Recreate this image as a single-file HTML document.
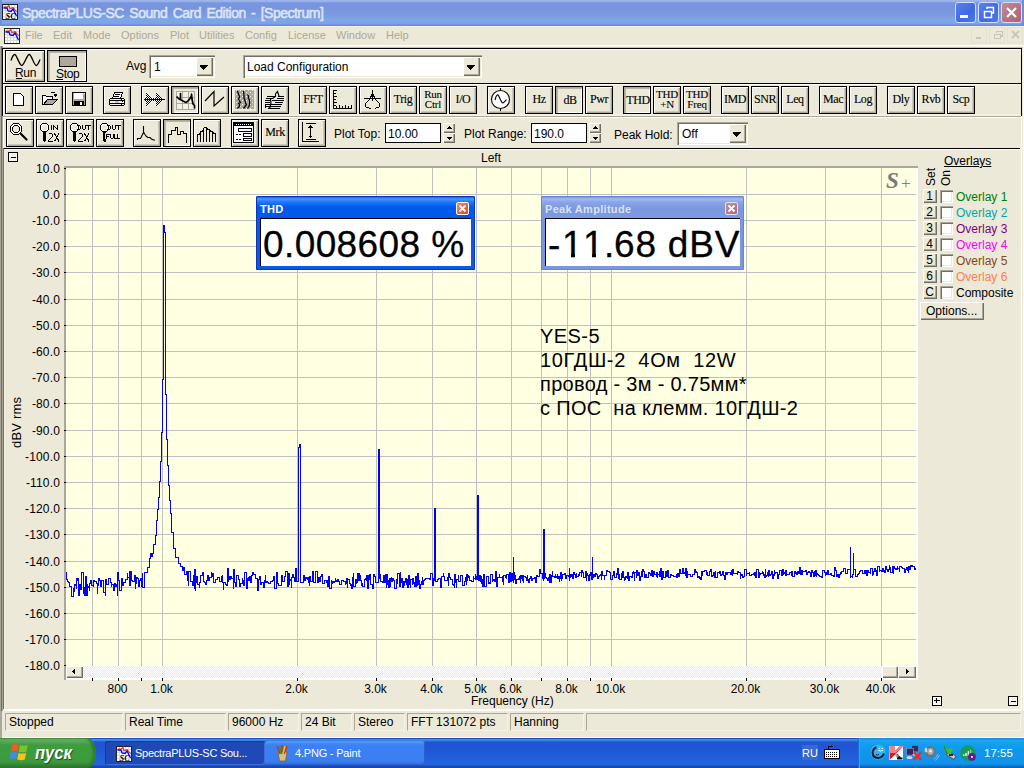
<!DOCTYPE html><html><head><meta charset="utf-8"><style>
*{margin:0;padding:0;box-sizing:border-box}
html,body{width:1024px;height:768px;overflow:hidden;background:#ece9d8;font-family:"Liberation Sans",sans-serif;position:relative}
.a{position:absolute}
.t{position:absolute;white-space:pre;line-height:1}
.btn{position:absolute;width:28px;height:28px;border:1px solid #000;background:#ece9d8;box-shadow:inset 1px 1px 0 #fff,inset -1px -1px 0 #aca899,inset -2px -2px 0 #ece9d8}
.btn.r{box-shadow:inset 1px 1px 0 #fff,inset -2px -2px 0 #aca899}
.btn.p{background:#f4f3ee;box-shadow:inset 1px 1px 0 #aca899,inset -1px -1px 0 #fff}
.bt{position:absolute;left:0;right:0;text-align:center;font-family:"Liberation Serif",serif;color:#000}
</style></head><body><div style="position:absolute;left:0px;top:0px;width:1024px;height:26px;background:linear-gradient(to bottom,#97aee8 0px,#a3bbee 1px,#88a6e6 2px,#7796df 3px,#7893df 6px,#7a98e1 14px,#7ea6e7 20px,#7ca2e6 24px,#6d8ad8 25px,#6d8ad8 26px)"></div><div style="position:absolute;left:0px;top:0px;width:2px;height:26px;background:#7090d8"></div><div style="position:absolute;left:1022px;top:0px;width:2px;height:26px;background:#6f8cdc"></div><svg class="a" style="left:2px;top:4px" width="16" height="16" viewBox="0 0 16 16"><rect x="0" y="0" width="16" height="16" fill="#222"/><rect x="1" y="1" width="14" height="14" fill="#fff"/><rect x="3" y="1" width="1" height="14" fill="#d8d8d8"/><rect x="1" y="3" width="14" height="1" fill="#d8d8d8"/><rect x="6" y="1" width="1" height="14" fill="#d8d8d8"/><rect x="1" y="6" width="14" height="1" fill="#d8d8d8"/><rect x="9" y="1" width="1" height="14" fill="#d8d8d8"/><rect x="1" y="9" width="14" height="1" fill="#d8d8d8"/><rect x="12" y="1" width="1" height="14" fill="#d8d8d8"/><rect x="1" y="12" width="14" height="1" fill="#d8d8d8"/><polyline points="1.5,3 5,3 7,1.5 8,5 11,3.5 13.5,6.5 14.5,8" fill="none" stroke="#f03030" stroke-width="1.2"/><polyline points="1.5,4 5,4 6,7 9,7.5 11,5 13,9 14.5,12" fill="none" stroke="#0000f0" stroke-width="1.3"/><text x="3.5" y="14.5" font-family="Liberation Serif" font-style="italic" font-weight="bold" font-size="8.5" fill="#000">SC</text></svg><div class="t" style="left:22px;top:6px;font-size:14px;font-weight:normal;color:#dce5f7;letter-spacing:-0.5px;word-spacing:2px;-webkit-text-stroke:0.55px #dce5f7">SpectraPLUS-SC Sound Card Edition - [Spectrum]</div><div style="position:absolute;left:955px;top:2px;width:21px;height:21px;border:1px solid #d4ddf6;border-radius:3px;background:linear-gradient(135deg,#5a82ea,#3e68e6 60%,#4a7cf0)"></div><div style="position:absolute;left:978px;top:2px;width:21px;height:21px;border:1px solid #d4ddf6;border-radius:3px;background:linear-gradient(135deg,#5a82ea,#3e68e6 60%,#4a7cf0)"></div><div style="position:absolute;left:1001px;top:2px;width:21px;height:21px;border:1px solid #d4ddf6;border-radius:3px;background:linear-gradient(135deg,#c08a94,#b06070)"></div><div style="position:absolute;left:960px;top:15px;width:8px;height:3px;background:#fff"></div><svg class="a" style="left:978px;top:2px" width="21" height="21"><rect x="6.5" y="9.5" width="7" height="6" fill="none" stroke="#fff" stroke-width="1.5"/><polyline points="9,7 9,5.5 15.5,5.5 15.5,11 13.5,11" fill="none" stroke="#fff" stroke-width="1.5"/></svg><svg class="a" style="left:1001px;top:2px" width="21" height="21"><path d="M6 6L15 15M15 6L6 15" stroke="#fff" stroke-width="2.2"/></svg><div style="position:absolute;left:0px;top:26px;width:1024px;height:19px;background:#ece9d8"></div><div style="position:absolute;left:0px;top:26px;width:1024px;height:1px;background:#f3f1e4"></div><div style="position:absolute;left:0px;top:45px;width:1024px;height:1px;background:#fff"></div><svg class="a" style="left:4px;top:28px" width="16" height="16" viewBox="0 0 16 16"><rect x="0" y="0" width="16" height="16" fill="#222"/><rect x="1" y="1" width="14" height="14" fill="#fff"/><rect x="3" y="1" width="1" height="14" fill="#d8d8d8"/><rect x="1" y="3" width="14" height="1" fill="#d8d8d8"/><rect x="6" y="1" width="1" height="14" fill="#d8d8d8"/><rect x="1" y="6" width="14" height="1" fill="#d8d8d8"/><rect x="9" y="1" width="1" height="14" fill="#d8d8d8"/><rect x="1" y="9" width="14" height="1" fill="#d8d8d8"/><rect x="12" y="1" width="1" height="14" fill="#d8d8d8"/><rect x="1" y="12" width="14" height="1" fill="#d8d8d8"/><polyline points="1.5,3 5,3 7,1.5 8,5 11,3.5 13.5,6.5 14.5,8" fill="none" stroke="#f03030" stroke-width="1.2"/><polyline points="1.5,4 5,4 6,7 9,7.5 11,5 13,9 14.5,12" fill="none" stroke="#0000f0" stroke-width="1.3"/></svg><div class="t" style="left:25px;top:30px;font-size:11px;color:#aca899">File</div><div class="t" style="left:53px;top:30px;font-size:11px;color:#aca899">Edit</div><div class="t" style="left:83px;top:30px;font-size:11px;color:#aca899">Mode</div><div class="t" style="left:121px;top:30px;font-size:11px;color:#aca899">Options</div><div class="t" style="left:170px;top:30px;font-size:11px;color:#aca899">Plot</div><div class="t" style="left:199px;top:30px;font-size:11px;color:#aca899">Utilities</div><div class="t" style="left:245px;top:30px;font-size:11px;color:#aca899">Config</div><div class="t" style="left:288px;top:30px;font-size:11px;color:#aca899">License</div><div class="t" style="left:336px;top:30px;font-size:11px;color:#aca899">Window</div><div class="t" style="left:386px;top:30px;font-size:11px;color:#aca899">Help</div><svg class="a" style="left:970px;top:27px" width="54" height="17" shape-rendering="crispEdges"><rect x="1.5" y="0.5" width="15" height="15" fill="none" stroke="#e4e1d0"/><rect x="19.5" y="0.5" width="15" height="15" fill="none" stroke="#e4e1d0"/><rect x="37.5" y="0.5" width="15" height="15" fill="none" stroke="#e4e1d0"/><rect x="6" y="10" width="5" height="2" fill="#c8c5b8"/><rect x="24.5" y="7.5" width="6" height="4" fill="none" stroke="#c8c5b8" stroke-width="1.2"/><polyline points="26.5,6 26.5,4.5 32.5,4.5 32.5,9 31,9" fill="none" stroke="#c8c5b8" stroke-width="1.2"/><path d="M42 4L49 11M49 4L42 11" stroke="#c8c5b8" stroke-width="1.8" shape-rendering="auto"/></svg><div style="position:absolute;left:0px;top:46px;width:2px;height:692px;background:#aca899"></div><div style="position:absolute;left:1px;top:46px;width:1px;height:692px;background:#9d9a8b"></div><div style="position:absolute;left:0px;top:46px;width:1024px;height:1px;background:#f6f4ea"></div><div style="position:absolute;left:0px;top:47px;width:1024px;height:1px;background:#c4c1b1"></div><div style="position:absolute;left:0px;top:46px;width:1px;height:691px;background:#aca899"></div><div style="position:absolute;left:1px;top:46px;width:1px;height:691px;background:#716f64"></div><div style="position:absolute;left:2px;top:46px;width:1px;height:691px;background:#aca899"></div><div style="position:absolute;left:3px;top:148px;width:1px;height:561px;background:#716f64"></div><div style="position:absolute;left:2px;top:48px;width:1020px;height:1px;background:#000"></div><div style="position:absolute;left:2px;top:48px;width:1px;height:68px;background:#000"></div><div style="position:absolute;left:1021px;top:48px;width:1px;height:68px;background:#000"></div><div style="position:absolute;left:3px;top:49px;width:1018px;height:1px;background:#fffdf3"></div><div style="position:absolute;left:3px;top:49px;width:1px;height:66px;background:#fffdf3"></div><div style="position:absolute;left:2px;top:83px;width:1020px;height:1px;background:#000"></div><div style="position:absolute;left:3px;top:84px;width:1018px;height:1px;background:#fffdf3"></div><div style="position:absolute;left:3px;top:114px;width:1018px;height:2px;background:#f3f1e4"></div><div style="position:absolute;left:2px;top:116px;width:1019px;height:1px;background:#aca899"></div><div style="position:absolute;left:3px;top:117px;width:1017px;height:1px;background:#fff"></div><div style="position:absolute;left:3px;top:117px;width:1px;height:31px;background:#fff"></div><div style="position:absolute;left:1021px;top:117px;width:1px;height:31px;background:#fff"></div><div style="position:absolute;left:4px;top:148px;width:1016px;height:1px;background:#000"></div><div style="position:absolute;left:4px;top:149px;width:1016px;height:1px;background:#fffbee"></div><div style="position:absolute;left:4px;top:149px;width:1px;height:560px;background:#f5f2e3"></div><div style="position:absolute;left:1021px;top:149px;width:1px;height:561px;background:#fff"></div><div style="position:absolute;left:1020px;top:149px;width:1px;height:560px;background:#f1efe2"></div><div style="position:absolute;left:1023px;top:46px;width:1px;height:691px;background:#fbfaf4"></div><div style="position:absolute;left:4px;top:709px;width:1017px;height:2px;background:#fff"></div><div style="position:absolute;left:5px;top:50px;width:40px;height:32px;border:1px solid #000;box-shadow:inset 1px 1px 0 #fff,inset -1px -1px 0 #aca899,inset -2px -2px 0 #cdcab9;background:#ece9d8"></div><div style="position:absolute;left:47px;top:50px;width:40px;height:32px;border:1px solid #000;box-shadow:inset 1px 1px 0 #aca899,inset 2px 2px 0 #b8b5a5,inset -1px -1px 0 #fff;background:#ece9d8"></div><svg class="a" style="left:5px;top:50px" width="40" height="32"><path d="M6 10.5C7.5 6 8.5 4.5 9.8 4.5C11.5 4.5 14.5 15.5 16.8 15.5C19 15.5 22 4.5 24.2 4.5C26.5 4.5 29 15.5 31.2 15.5C32.8 15.5 34 12 35 9.5" fill="none" stroke="#000" stroke-width="1.3"/></svg><div class="t" style="left:15px;top:67px;font-size:12px;color:#000;letter-spacing:-0.3px">Run</div><div style="position:absolute;left:16px;top:78px;width:6px;height:1px;background:#000"></div><div style="position:absolute;left:59px;top:56px;width:18px;height:11px;background:#aca899;border:1px solid #000"></div><div class="t" style="left:56px;top:68px;font-size:12px;color:#000;letter-spacing:-0.3px">Stop</div><div style="position:absolute;left:56px;top:79px;width:7px;height:1px;background:#000"></div><div class="t" style="left:126px;top:60px;font-size:12px;color:#000">Avg</div><div style="position:absolute;left:149px;top:55px;width:66px;height:23px;background:#fff;box-shadow:inset 1px 1px 0 #aca899,inset 2px 2px 0 #716f64,inset -1px -1px 0 #fff,inset -2px -2px 0 #ece9d8"></div><div style="position:absolute;left:196px;top:57px;width:17px;height:19px;background:#ece9d8;box-shadow:inset 1px 1px 0 #fff,inset -1px -1px 0 #716f64,inset -2px -2px 0 #aca899"></div><svg class="a" style="left:196px;top:57px" width="17" height="19" shape-rendering="crispEdges"><path d="M5 8h7v1h-1v1h-1v1h-1v1h-1v1h-1v-1h-1v-1h-1v-1h-1v-1h-1z" fill="#000"/></svg><div class="t" style="left:154px;top:61px;font-size:12px;color:#000">1</div><div style="position:absolute;left:243px;top:55px;width:239px;height:23px;background:#fff;box-shadow:inset 1px 1px 0 #aca899,inset 2px 2px 0 #716f64,inset -1px -1px 0 #fff,inset -2px -2px 0 #ece9d8"></div><div style="position:absolute;left:463px;top:57px;width:17px;height:19px;background:#ece9d8;box-shadow:inset 1px 1px 0 #fff,inset -1px -1px 0 #716f64,inset -2px -2px 0 #aca899"></div><svg class="a" style="left:463px;top:57px" width="17" height="19" shape-rendering="crispEdges"><path d="M5 8h7v1h-1v1h-1v1h-1v1h-1v1h-1v-1h-1v-1h-1v-1h-1v-1h-1z" fill="#000"/></svg><div class="t" style="left:247px;top:61px;font-size:12px;color:#000">Load Configuration</div><div style="position:absolute;left:5px;top:86px;width:28px;height:28px;border:1px solid #000;box-shadow:inset 1px 1px 0 #fff,inset -1px -1px 0 #aca899,inset -2px -2px 0 #cdcab9;background:#ece9d8"></div><div style="position:absolute;left:35px;top:86px;width:28px;height:28px;border:1px solid #000;box-shadow:inset 1px 1px 0 #fff,inset -1px -1px 0 #aca899,inset -2px -2px 0 #cdcab9;background:#ece9d8"></div><div style="position:absolute;left:65px;top:86px;width:28px;height:28px;border:1px solid #000;box-shadow:inset 1px 1px 0 #fff,inset -1px -1px 0 #aca899,inset -2px -2px 0 #cdcab9;background:#ece9d8"></div><div style="position:absolute;left:103px;top:86px;width:28px;height:28px;border:1px solid #000;box-shadow:inset 1px 1px 0 #fff,inset -1px -1px 0 #aca899,inset -2px -2px 0 #cdcab9;background:#ece9d8"></div><div style="position:absolute;left:141px;top:86px;width:28px;height:28px;border:1px solid #000;box-shadow:inset 1px 1px 0 #fff,inset -1px -1px 0 #aca899,inset -2px -2px 0 #cdcab9;background:#ece9d8"></div><div style="position:absolute;left:171px;top:86px;width:28px;height:28px;border:1px solid #000;box-shadow:inset 1px 1px 0 #aca899,inset 2px 2px 0 #b8b5a5,inset -1px -1px 0 #fff;background:#ece9d8"></div><div style="position:absolute;left:201px;top:86px;width:28px;height:28px;border:1px solid #000;box-shadow:inset 1px 1px 0 #fff,inset -1px -1px 0 #aca899,inset -2px -2px 0 #cdcab9;background:#ece9d8"></div><div style="position:absolute;left:231px;top:86px;width:28px;height:28px;border:1px solid #000;box-shadow:inset 1px 1px 0 #fff,inset -1px -1px 0 #aca899,inset -2px -2px 0 #cdcab9;background:#ece9d8"></div><div style="position:absolute;left:261px;top:86px;width:28px;height:28px;border:1px solid #000;box-shadow:inset 1px 1px 0 #fff,inset -1px -1px 0 #aca899,inset -2px -2px 0 #cdcab9;background:#ece9d8"></div><div style="position:absolute;left:299px;top:86px;width:28px;height:28px;border:1px solid #000;box-shadow:inset 1px 1px 0 #fff,inset -1px -1px 0 #aca899,inset -2px -2px 0 #cdcab9;background:#ece9d8"></div><div class="t" style="left:299px;top:93px;width:28px;text-align:center;font-family:'Liberation Serif',serif;font-size:12px;color:#000;-webkit-text-stroke:0.12px #000;letter-spacing:-0.4px">FFT</div><div style="position:absolute;left:329px;top:86px;width:28px;height:28px;border:1px solid #000;box-shadow:inset 1px 1px 0 #fff,inset -1px -1px 0 #aca899,inset -2px -2px 0 #cdcab9;background:#ece9d8"></div><div style="position:absolute;left:359px;top:86px;width:28px;height:28px;border:1px solid #000;box-shadow:inset 1px 1px 0 #fff,inset -1px -1px 0 #aca899,inset -2px -2px 0 #cdcab9;background:#ece9d8"></div><div style="position:absolute;left:389px;top:86px;width:28px;height:28px;border:1px solid #000;box-shadow:inset 1px 1px 0 #fff,inset -1px -1px 0 #aca899,inset -2px -2px 0 #cdcab9;background:#ece9d8"></div><div class="t" style="left:389px;top:93px;width:28px;text-align:center;font-family:'Liberation Serif',serif;font-size:12px;color:#000;-webkit-text-stroke:0.12px #000;letter-spacing:-0.4px">Trig</div><div style="position:absolute;left:419px;top:86px;width:28px;height:28px;border:1px solid #000;box-shadow:inset 1px 1px 0 #fff,inset -1px -1px 0 #aca899,inset -2px -2px 0 #cdcab9;background:#ece9d8"></div><div class="t" style="left:419px;top:89px;width:28px;text-align:center;font-family:'Liberation Serif',serif;font-size:11px;color:#000;-webkit-text-stroke:0.1px #000;letter-spacing:-0.2px">Run</div><div class="t" style="left:419px;top:99px;width:28px;text-align:center;font-family:'Liberation Serif',serif;font-size:11px;color:#000;-webkit-text-stroke:0.1px #000;letter-spacing:-0.2px">Ctrl</div><div style="position:absolute;left:449px;top:86px;width:28px;height:28px;border:1px solid #000;box-shadow:inset 1px 1px 0 #fff,inset -1px -1px 0 #aca899,inset -2px -2px 0 #cdcab9;background:#ece9d8"></div><div class="t" style="left:449px;top:93px;width:28px;text-align:center;font-family:'Liberation Serif',serif;font-size:12px;color:#000;-webkit-text-stroke:0.12px #000;letter-spacing:-0.4px">I/O</div><div style="position:absolute;left:487px;top:86px;width:28px;height:28px;border:1px solid #000;box-shadow:inset 1px 1px 0 #fff,inset -1px -1px 0 #aca899,inset -2px -2px 0 #cdcab9;background:#ece9d8"></div><div style="position:absolute;left:525px;top:86px;width:28px;height:28px;border:1px solid #000;box-shadow:inset 1px 1px 0 #fff,inset -1px -1px 0 #aca899,inset -2px -2px 0 #cdcab9;background:#ece9d8"></div><div class="t" style="left:525px;top:93px;width:28px;text-align:center;font-family:'Liberation Serif',serif;font-size:12px;color:#000;-webkit-text-stroke:0.12px #000;letter-spacing:-0.4px">Hz</div><div style="position:absolute;left:555px;top:86px;width:28px;height:28px;border:1px solid #000;box-shadow:inset 1px 1px 0 #aca899,inset 2px 2px 0 #b8b5a5,inset -1px -1px 0 #fff;background:#ece9d8"></div><div class="t" style="left:556px;top:94px;width:28px;text-align:center;font-family:'Liberation Serif',serif;font-size:12px;color:#000;-webkit-text-stroke:0.12px #000;letter-spacing:-0.4px">dB</div><div style="position:absolute;left:585px;top:86px;width:28px;height:28px;border:1px solid #000;box-shadow:inset 1px 1px 0 #fff,inset -1px -1px 0 #aca899,inset -2px -2px 0 #cdcab9;background:#ece9d8"></div><div class="t" style="left:585px;top:93px;width:28px;text-align:center;font-family:'Liberation Serif',serif;font-size:12px;color:#000;-webkit-text-stroke:0.12px #000;letter-spacing:-0.4px">Pwr</div><div style="position:absolute;left:623px;top:86px;width:28px;height:28px;border:1px solid #000;box-shadow:inset 1px 1px 0 #aca899,inset 2px 2px 0 #b8b5a5,inset -1px -1px 0 #fff;background:#ece9d8"></div><div class="t" style="left:624px;top:94px;width:28px;text-align:center;font-family:'Liberation Serif',serif;font-size:12px;color:#000;-webkit-text-stroke:0.12px #000;letter-spacing:-0.4px">THD</div><div style="position:absolute;left:653px;top:86px;width:28px;height:28px;border:1px solid #000;box-shadow:inset 1px 1px 0 #fff,inset -1px -1px 0 #aca899,inset -2px -2px 0 #cdcab9;background:#ece9d8"></div><div class="t" style="left:653px;top:89px;width:28px;text-align:center;font-family:'Liberation Serif',serif;font-size:11px;color:#000;-webkit-text-stroke:0.1px #000;letter-spacing:-0.2px">THD</div><div class="t" style="left:653px;top:99px;width:28px;text-align:center;font-family:'Liberation Serif',serif;font-size:11px;color:#000;-webkit-text-stroke:0.1px #000;letter-spacing:-0.2px">+N</div><div style="position:absolute;left:683px;top:86px;width:28px;height:28px;border:1px solid #000;box-shadow:inset 1px 1px 0 #fff,inset -1px -1px 0 #aca899,inset -2px -2px 0 #cdcab9;background:#ece9d8"></div><div class="t" style="left:683px;top:89px;width:28px;text-align:center;font-family:'Liberation Serif',serif;font-size:11px;color:#000;-webkit-text-stroke:0.1px #000;letter-spacing:-0.2px">THD</div><div class="t" style="left:683px;top:99px;width:28px;text-align:center;font-family:'Liberation Serif',serif;font-size:11px;color:#000;-webkit-text-stroke:0.1px #000;letter-spacing:-0.2px">Freq</div><div style="position:absolute;left:721px;top:86px;width:28px;height:28px;border:1px solid #000;box-shadow:inset 1px 1px 0 #fff,inset -1px -1px 0 #aca899,inset -2px -2px 0 #cdcab9;background:#ece9d8"></div><div class="t" style="left:721px;top:93px;width:28px;text-align:center;font-family:'Liberation Serif',serif;font-size:12px;color:#000;-webkit-text-stroke:0.12px #000;letter-spacing:-0.4px">IMD</div><div style="position:absolute;left:751px;top:86px;width:28px;height:28px;border:1px solid #000;box-shadow:inset 1px 1px 0 #fff,inset -1px -1px 0 #aca899,inset -2px -2px 0 #cdcab9;background:#ece9d8"></div><div class="t" style="left:751px;top:93px;width:28px;text-align:center;font-family:'Liberation Serif',serif;font-size:12px;color:#000;-webkit-text-stroke:0.12px #000;letter-spacing:-0.4px">SNR</div><div style="position:absolute;left:781px;top:86px;width:28px;height:28px;border:1px solid #000;box-shadow:inset 1px 1px 0 #fff,inset -1px -1px 0 #aca899,inset -2px -2px 0 #cdcab9;background:#ece9d8"></div><div class="t" style="left:781px;top:93px;width:28px;text-align:center;font-family:'Liberation Serif',serif;font-size:12px;color:#000;-webkit-text-stroke:0.12px #000;letter-spacing:-0.4px">Leq</div><div style="position:absolute;left:819px;top:86px;width:28px;height:28px;border:1px solid #000;box-shadow:inset 1px 1px 0 #fff,inset -1px -1px 0 #aca899,inset -2px -2px 0 #cdcab9;background:#ece9d8"></div><div class="t" style="left:819px;top:93px;width:28px;text-align:center;font-family:'Liberation Serif',serif;font-size:12px;color:#000;-webkit-text-stroke:0.12px #000;letter-spacing:-0.4px">Mac</div><div style="position:absolute;left:849px;top:86px;width:28px;height:28px;border:1px solid #000;box-shadow:inset 1px 1px 0 #fff,inset -1px -1px 0 #aca899,inset -2px -2px 0 #cdcab9;background:#ece9d8"></div><div class="t" style="left:849px;top:93px;width:28px;text-align:center;font-family:'Liberation Serif',serif;font-size:12px;color:#000;-webkit-text-stroke:0.12px #000;letter-spacing:-0.4px">Log</div><div style="position:absolute;left:887px;top:86px;width:28px;height:28px;border:1px solid #000;box-shadow:inset 1px 1px 0 #fff,inset -1px -1px 0 #aca899,inset -2px -2px 0 #cdcab9;background:#ece9d8"></div><div class="t" style="left:887px;top:93px;width:28px;text-align:center;font-family:'Liberation Serif',serif;font-size:12px;color:#000;-webkit-text-stroke:0.12px #000;letter-spacing:-0.4px">Dly</div><div style="position:absolute;left:917px;top:86px;width:28px;height:28px;border:1px solid #000;box-shadow:inset 1px 1px 0 #fff,inset -1px -1px 0 #aca899,inset -2px -2px 0 #cdcab9;background:#ece9d8"></div><div class="t" style="left:917px;top:93px;width:28px;text-align:center;font-family:'Liberation Serif',serif;font-size:12px;color:#000;-webkit-text-stroke:0.12px #000;letter-spacing:-0.4px">Rvb</div><div style="position:absolute;left:947px;top:86px;width:28px;height:28px;border:1px solid #000;box-shadow:inset 1px 1px 0 #fff,inset -1px -1px 0 #aca899,inset -2px -2px 0 #cdcab9;background:#ece9d8"></div><div class="t" style="left:947px;top:93px;width:28px;text-align:center;font-family:'Liberation Serif',serif;font-size:12px;color:#000;-webkit-text-stroke:0.12px #000;letter-spacing:-0.4px">Scp</div><svg class="a" style="left:5px;top:86px" width="28" height="28" shape-rendering="crispEdges"><path d="M8.5 7.5H15.5L18.5 10.5V19.5H8.5Z" fill="#fff" stroke="#000"/><rect x="16" y="8" width="1" height="1" fill="#000"/><rect x="17" y="9" width="1" height="1" fill="#000"/></svg><svg class="a" style="left:35px;top:86px" width="28" height="28" shape-rendering="crispEdges"><path d="M7.5 18.5V9.5H10.5L11.5 10.5H17.5V13.5" fill="#fff" stroke="#000"/><rect x="8" y="11" width="9" height="7" fill="#fff"/><path d="M8.5 18.5L12.5 13.5H22.5L17.5 18.5Z" fill="#aca899" stroke="#000"/><rect x="7" y="18" width="11" height="1" fill="#000"/><polyline points="15.5,7.5 16.5,6.5 19.5,6.5 20.5,7.5" fill="none" stroke="#000"/><path d="M19 8H22V10H21V11H20V10H19Z" fill="#000"/></svg><svg class="a" style="left:65px;top:86px" width="28" height="28" shape-rendering="crispEdges"><rect x="7.5" y="6.5" width="13" height="13" fill="#aca899" stroke="#000"/><rect x="9" y="7" width="9" height="6" fill="#fff"/><rect x="9" y="15" width="10" height="5" fill="#000"/><rect x="15" y="16" width="2" height="3" fill="#fff"/><rect x="19" y="7" width="1" height="1" fill="#fff"/></svg><svg class="a" style="left:103px;top:86px" width="28" height="28" shape-rendering="crispEdges"><path d="M11.5 6.5H19.5L17.5 12.5H9.5Z" fill="#fff" stroke="#000"/><rect x="12" y="8" width="5" height="1" fill="#000"/><rect x="11" y="10" width="5" height="1" fill="#000"/><path d="M7.5 12.5H20.5L21.5 13.5V18.5L20.5 19.5H7.5L6.5 18.5V13.5Z" fill="#f4f2e6" stroke="#000"/><rect x="7" y="14" width="14" height="1" fill="#000"/><rect x="7" y="17" width="14" height="1" fill="#000"/><rect x="12" y="15" width="4" height="2" fill="#c8c5b5"/><rect x="18" y="13" width="1" height="1" fill="#000"/><rect x="19" y="15" width="1" height="1" fill="#000"/><rect x="18" y="18" width="1" height="1" fill="#000"/></svg><svg class="a" style="left:141px;top:86px" width="28" height="28" shape-rendering="crispEdges"><pattern id="d1" width="2" height="2" patternUnits="userSpaceOnUse"><rect width="2" height="2" fill="#fff"/><rect width="1" height="1" fill="#000"/><rect x="1" y="1" width="1" height="1" fill="#000"/></pattern><path d="M5 5L13 13.5L5 22Z" fill="url(#d1)"/><path d="M15 7L21.5 13.5L15 20Z" fill="url(#d1)"/><rect x="3" y="13" width="21" height="1" fill="#000"/><rect x="4" y="12" width="17" height="3" fill="url(#d1)"/><rect x="3" y="13" width="21" height="1" fill="#000"/></svg><svg class="a" style="left:171px;top:86px" width="28" height="28" shape-rendering="crispEdges"><rect x="5" y="5" width="19" height="19" fill="#f3f1e6"/><rect x="5.5" y="5.5" width="18" height="18" fill="none" stroke="#aca899"/><line x1="11.5" y1="5" x2="11.5" y2="24" stroke="#aca899"/><line x1="5" y1="11.5" x2="24" y2="11.5" stroke="#aca899"/><line x1="17.5" y1="5" x2="17.5" y2="24" stroke="#aca899"/><line x1="5" y1="17.5" x2="24" y2="17.5" stroke="#aca899"/><polyline points="5.5,10.5 7,12 8.5,13.5 9.5,13 9.5,7.5 9.5,13.5 11,14.5 13,15.5 15,16.5 17,15 19,12.5 20.5,10 20.5,8 21,13 21.5,15.5 22,18 23.5,19.5 23.5,22.5" fill="none" stroke="#000" stroke-width="1.7" stroke-linejoin="round" shape-rendering="auto"/></svg><svg class="a" style="left:201px;top:86px" width="28" height="28" ><polyline points="4,15 13,5.5 13,20 23,11" fill="none" stroke="#000" stroke-width="1.2" shape-rendering="auto"/></svg><svg class="a" style="left:231px;top:86px" width="28" height="28" ><pattern id="d2" width="4" height="4" patternUnits="userSpaceOnUse"><rect width="4" height="4" fill="#aca899"/><rect x="1" y="0" width="1" height="1" fill="#ece9d8"/><rect x="3" y="2" width="1" height="1" fill="#fff"/></pattern><rect x="4" y="4" width="19" height="19" fill="url(#d2)"/><g fill="none" stroke="#000" stroke-width="1.3" stroke-linejoin="round"><polyline points="6.5,5 7.5,8 8.5,11 7.5,13 8.5,15 9.5,16.5 7.5,17.5 8.5,19 8,21 6.5,22.5"/><polyline points="12.5,5 13,9 13,12 14,14.5 14.5,17 15.5,18.5 14,20.5 12.5,22.5"/><polyline points="16.5,8.5 17.5,10 17.5,12.5 18.5,14 18.5,19 17.5,21 16.5,22.5"/></g></svg><svg class="a" style="left:261px;top:86px" width="28" height="28" ><g fill="#000"><rect x="6" y="10" width="8" height="1"/><rect x="17" y="10" width="6" height="1"/><rect x="5" y="12" width="7" height="1"/><rect x="16" y="12" width="7" height="1"/><rect x="4" y="14" width="6" height="1"/><rect x="11" y="14" width="12" height="1"/><rect x="4" y="16" width="5" height="1"/><rect x="14" y="16" width="8" height="1"/><rect x="5" y="18" width="16" height="1"/><rect x="5" y="20" width="15" height="1"/><rect x="7" y="22" width="12" height="1"/></g><polyline points="11.5,12.5 14.5,10.5 14.5,8 16.5,5.5 17.5,8.5 18,10.5" fill="none" stroke="#000" stroke-width="1.1"/><polyline points="9.5,13 10,17 9,21.5 7.5,22.5" fill="none" stroke="#000" stroke-width="1.2"/><polyline points="4.5,18 4.5,22" fill="none" stroke="#000" stroke-width="1"/></svg><svg class="a" style="left:329px;top:86px" width="28" height="28" shape-rendering="crispEdges"><rect x="4" y="4" width="1" height="19" fill="#000"/><rect x="4" y="22" width="19" height="1" fill="#000"/><rect x="5" y="4" width="3" height="1" fill="#000"/><rect x="5" y="7" width="2" height="1" fill="#000"/><rect x="5" y="10" width="3" height="1" fill="#000"/><rect x="5" y="13" width="2" height="1" fill="#000"/><rect x="5" y="16" width="3" height="1" fill="#000"/><rect x="5" y="19" width="2" height="1" fill="#000"/><rect x="7" y="20" width="1" height="2" fill="#000"/><rect x="10" y="19" width="1" height="3" fill="#000"/><rect x="13" y="20" width="1" height="2" fill="#000"/><rect x="16" y="19" width="1" height="3" fill="#000"/><rect x="19" y="20" width="1" height="2" fill="#000"/><rect x="22" y="19" width="1" height="3" fill="#000"/></svg><svg class="a" style="left:359px;top:86px" width="28" height="28" shape-rendering="crispEdges"><rect x="13" y="4" width="1" height="11" fill="#000"/><rect x="5" y="12" width="17" height="1" fill="#000"/><path d="M13 7H14V8H15V10H16V12H11V10H12V8H13Z" fill="#000"/><rect x="12" y="11" width="1" height="1" fill="#fff"/><rect x="14" y="11" width="1" height="1" fill="#fff"/><polyline points="11.5,12.5 10.5,13.5 9.5,14.5 8.5,15.5 7.5,16.5 6.5,17.5 6.5,20.5 7.5,21.5 9.5,21.5 10.5,22.5 11.5,22.5" fill="none" stroke="#000"/><polyline points="15.5,12.5 16.5,13.5 17.5,14.5 18.5,15.5 19.5,16.5 20.5,17.5 20.5,20.5 19.5,21.5 17.5,21.5 16.5,22.5 15.5,22.5" fill="none" stroke="#000"/></svg><svg class="a" style="left:487px;top:86px" width="28" height="28" ><circle cx="13.5" cy="13.5" r="9" fill="#fff" stroke="#000" stroke-width="1.1"/><path d="M13.5 2V4.5M13.5 22.5V25" stroke="#000" stroke-width="1.1"/><path d="M8 14Q10 6 12 10.5T15 16.5T19.5 13.5" fill="none" stroke="#000" stroke-width="1.1"/></svg><div style="position:absolute;left:6px;top:119px;width:28px;height:28px;border:1px solid #000;box-shadow:inset 1px 1px 0 #fff,inset -1px -1px 0 #aca899,inset -2px -2px 0 #cdcab9;background:#ece9d8"></div><div style="position:absolute;left:36px;top:119px;width:28px;height:28px;border:1px solid #000;box-shadow:inset 1px 1px 0 #fff,inset -1px -1px 0 #aca899,inset -2px -2px 0 #cdcab9;background:#ece9d8"></div><div style="position:absolute;left:66px;top:119px;width:28px;height:28px;border:1px solid #000;box-shadow:inset 1px 1px 0 #fff,inset -1px -1px 0 #aca899,inset -2px -2px 0 #cdcab9;background:#ece9d8"></div><div style="position:absolute;left:96px;top:119px;width:28px;height:28px;border:1px solid #000;box-shadow:inset 1px 1px 0 #fff,inset -1px -1px 0 #aca899,inset -2px -2px 0 #cdcab9;background:#ece9d8"></div><div style="position:absolute;left:133px;top:119px;width:28px;height:28px;border:1px solid #000;box-shadow:inset 1px 1px 0 #fff,inset -1px -1px 0 #aca899,inset -2px -2px 0 #cdcab9;background:#ece9d8"></div><div style="position:absolute;left:163px;top:119px;width:28px;height:28px;border:1px solid #000;box-shadow:inset 1px 1px 0 #aca899,inset 2px 2px 0 #b8b5a5,inset -1px -1px 0 #fff;background:#ece9d8"></div><div style="position:absolute;left:193px;top:119px;width:28px;height:28px;border:1px solid #000;box-shadow:inset 1px 1px 0 #fff,inset -1px -1px 0 #aca899,inset -2px -2px 0 #cdcab9;background:#ece9d8"></div><div style="position:absolute;left:231px;top:119px;width:28px;height:28px;border:1px solid #000;box-shadow:inset 1px 1px 0 #fff,inset -1px -1px 0 #aca899,inset -2px -2px 0 #cdcab9;background:#ece9d8"></div><div style="position:absolute;left:261px;top:119px;width:28px;height:28px;border:1px solid #000;box-shadow:inset 1px 1px 0 #fff,inset -1px -1px 0 #aca899,inset -2px -2px 0 #cdcab9;background:#ece9d8"></div><div style="position:absolute;left:298px;top:119px;width:28px;height:28px;border:1px solid #000;box-shadow:inset 1px 1px 0 #fff,inset -1px -1px 0 #aca899,inset -2px -2px 0 #cdcab9;background:#ece9d8"></div><div class="t" style="left:261px;top:126px;width:28px;text-align:center;font-family:'Liberation Serif',serif;font-size:12px;color:#000;-webkit-text-stroke:0.12px #000;letter-spacing:-0.4px">Mrk</div><svg class="a" style="left:6px;top:119px" width="28" height="28" shape-rendering="crispEdges"><path d="M7.5 4.5H12.5L15.5 7.5V12.5L12.5 15.5H7.5L4.5 12.5V7.5Z" fill="#fff" stroke="#000"/><path d="M8.5 6.5H11.5L13.5 8.5V11.5L11.5 13.5H8.5L6.5 11.5V8.5Z" fill="#ece9d8" stroke="#000"/><path d="M15 15L20.5 20.5" stroke="#000" stroke-width="2.2" stroke-linecap="round" shape-rendering="auto"/></svg><svg class="a" style="left:36px;top:119px" width="28" height="28" shape-rendering="crispEdges"><path d="M6.5 4.5H10.5L12.5 6.5V10.5L10.5 12.5H6.5L4.5 10.5V6.5Z" fill="#fff" stroke="#000"/><path d="M7 6H10L11 7V10L10 11H7L6 10V7Z" fill="#ece9d8"/><path d="M7 13H10V21L8.5 23L7 21Z" fill="#000"/><rect x="15" y="6" width="1" height="5" fill="#000"/><rect x="17" y="6" width="1" height="5" fill="#000"/><rect x="21" y="6" width="1" height="5" fill="#000"/><rect x="18" y="7" width="1" height="1" fill="#000"/><rect x="19" y="8" width="1" height="1" fill="#000"/><rect x="20" y="9" width="1" height="1" fill="#000"/><path d="M12.5 15.5Q13 14.5 14.5 14.5Q16.5 14.5 16.5 16.5Q16.5 18 14.5 19.5L12.5 21.5V22.5H17" fill="none" stroke="#000" stroke-width="1"/><path d="M18.5 14.5L23 22.5M23 14.5L18.5 22.5" stroke="#000" stroke-width="1.1"/></svg><svg class="a" style="left:66px;top:119px" width="28" height="28" shape-rendering="crispEdges"><path d="M6.5 4.5H10.5L12.5 6.5V10.5L10.5 12.5H6.5L4.5 10.5V6.5Z" fill="#fff" stroke="#000"/><path d="M7 6H10L11 7V10L10 11H7L6 10V7Z" fill="#ece9d8"/><path d="M7 13H10V21L8.5 23L7 21Z" fill="#000"/><rect x="11" y="6" width="3" height="1" fill="#000"/><rect x="11" y="10" width="3" height="1" fill="#000"/><rect x="14" y="7" width="1" height="3" fill="#000"/><rect x="16" y="6" width="1" height="4" fill="#000"/><rect x="19" y="6" width="1" height="4" fill="#000"/><rect x="17" y="10" width="2" height="1" fill="#000"/><rect x="20" y="6" width="5" height="1" fill="#000"/><rect x="22" y="7" width="1" height="4" fill="#000"/><path d="M12.5 15.5Q13 14.5 14.5 14.5Q16.5 14.5 16.5 16.5Q16.5 18 14.5 19.5L12.5 21.5V22.5H17" fill="none" stroke="#000" stroke-width="1"/><path d="M18.5 14.5L23 22.5M23 14.5L18.5 22.5" stroke="#000" stroke-width="1.1"/></svg><svg class="a" style="left:96px;top:119px" width="28" height="28" shape-rendering="crispEdges"><path d="M6.5 4.5H10.5L12.5 6.5V10.5L10.5 12.5H6.5L4.5 10.5V6.5Z" fill="#fff" stroke="#000"/><path d="M7 6H10L11 7V10L10 11H7L6 10V7Z" fill="#ece9d8"/><path d="M7 13H10L9 15Q8 17 9 19L10 21V23H8L7 21Z" fill="#000"/><rect x="11" y="6" width="3" height="1" fill="#000"/><rect x="11" y="10" width="3" height="1" fill="#000"/><rect x="14" y="7" width="1" height="3" fill="#000"/><rect x="16" y="6" width="1" height="4" fill="#000"/><rect x="19" y="6" width="1" height="4" fill="#000"/><rect x="17" y="10" width="2" height="1" fill="#000"/><rect x="20" y="6" width="5" height="1" fill="#000"/><rect x="22" y="7" width="1" height="4" fill="#000"/><rect x="10" y="15" width="1" height="5" fill="#000"/><rect x="11" y="15" width="3" height="1" fill="#000"/><rect x="11" y="17" width="2" height="1" fill="#000"/><rect x="14" y="15" width="1" height="4" fill="#000"/><rect x="17" y="15" width="1" height="4" fill="#000"/><rect x="15" y="19" width="2" height="1" fill="#000"/><rect x="18" y="15" width="1" height="5" fill="#000"/><rect x="19" y="19" width="2" height="1" fill="#000"/><rect x="21" y="15" width="1" height="5" fill="#000"/><rect x="22" y="19" width="2" height="1" fill="#000"/></svg><svg class="a" style="left:133px;top:119px" width="28" height="28" ><polyline points="4.5,21 4.5,19.5 7.5,19.5 8.5,17.5 9.5,15.5 10.5,13.5 10.5,7 10.5,13 12,15.5 13.5,17.5 15,18.5 17,18.5 18.5,20 20.5,21 22,21" fill="none" stroke="#000" stroke-width="1.1"/></svg><svg class="a" style="left:163px;top:119px" width="28" height="28" shape-rendering="crispEdges"><polyline points="5.5,24 5.5,15.5 8.5,15.5 8.5,11.5 12.5,11.5 12.5,8.5 14.5,8.5 14.5,15.5 17.5,15.5 17.5,12.5 20.5,12.5 20.5,14.5 23.5,14.5 23.5,24" fill="none" stroke="#000" stroke-width="1"/></svg><svg class="a" style="left:193px;top:119px" width="28" height="28" shape-rendering="crispEdges"><rect x="4" y="15" width="1" height="8" fill="#000"/><rect x="7" y="12" width="1" height="11" fill="#000"/><rect x="10" y="9" width="1" height="14" fill="#000"/><rect x="13" y="8" width="1" height="15" fill="#000"/><rect x="16" y="10" width="1" height="13" fill="#000"/><rect x="19" y="12" width="1" height="11" fill="#000"/><rect x="22" y="14" width="1" height="9" fill="#000"/><polyline points="4.5,15.5 6.5,15.5 7.5,12.5 9.5,12.5 10.5,9.5 11.5,8.5 13.5,8.5 14.5,10.5 16.5,10.5 17.5,12.5 19.5,12.5 20.5,14.5 22.5,14.5 22.5,23" fill="none" stroke="#000" stroke-width="1"/></svg><svg class="a" style="left:231px;top:119px" width="28" height="28" shape-rendering="crispEdges"><rect x="2.5" y="3.5" width="20" height="20" fill="#fff" stroke="#000"/><rect x="3" y="4" width="19" height="3" fill="#000"/><rect x="5" y="5" width="1" height="1" fill="#fff"/><rect x="7" y="5" width="1" height="1" fill="#fff"/><rect x="9" y="5" width="1" height="1" fill="#fff"/><rect x="11" y="5" width="1" height="1" fill="#fff"/><rect x="13" y="5" width="1" height="1" fill="#fff"/><rect x="15" y="5" width="1" height="1" fill="#fff"/><rect x="17" y="5" width="1" height="1" fill="#fff"/><rect x="19" y="5" width="1" height="1" fill="#fff"/><rect x="7.5" y="9.5" width="13" height="3" fill="#fff" stroke="#000"/><rect x="12.5" y="14.5" width="8" height="3" fill="#fff" stroke="#000"/><rect x="12.5" y="19.5" width="8" height="2" fill="#fff" stroke="#000"/><rect x="5" y="15" width="2" height="1" fill="#000"/><rect x="8" y="15" width="2" height="1" fill="#000"/><rect x="5" y="20" width="2" height="1" fill="#000"/><rect x="8" y="20" width="2" height="1" fill="#000"/></svg><svg class="a" style="left:298px;top:119px" width="28" height="28" shape-rendering="crispEdges"><rect x="4" y="3" width="1" height="20" fill="#000"/><rect x="4" y="22" width="17" height="1" fill="#000"/><rect x="8" y="4" width="10" height="1" fill="#000"/><rect x="8" y="20" width="10" height="1" fill="#000"/><rect x="12" y="6" width="1" height="13" fill="#000"/><path d="M10 8.5L12.5 5.5L15 8.5Z M10 16.5L12.5 19.5L15 16.5Z" fill="#000"/></svg><div class="t" style="left:334px;top:128px;font-size:12px;color:#000">Plot Top:</div><div style="position:absolute;left:385px;top:123px;width:56px;height:20px;background:#fff;border:1px solid #000"></div><div class="t" style="left:388px;top:128px;font-size:12px;color:#000">10.00</div><div style="position:absolute;left:443px;top:123px;width:12px;height:10px;background:#ece9d8;box-shadow:inset 1px 1px 0 #fff,inset -1px -1px 0 #716f64,inset -2px -2px 0 #aca899"></div><div style="position:absolute;left:443px;top:133px;width:12px;height:10px;background:#ece9d8;box-shadow:inset 1px 1px 0 #fff,inset -1px -1px 0 #716f64,inset -2px -2px 0 #aca899"></div><svg class="a" style="left:443px;top:123px" width="12" height="20" shape-rendering="crispEdges"><path d="M4 6h5v-1h-1v-1h-1v-1h-1v1h-1v1h-1z" fill="#000"/><path d="M4 14h5v1h-1v1h-1v1h-1v-1h-1v-1h-1z" fill="#000"/></svg><div class="t" style="left:464px;top:128px;font-size:12px;color:#000">Plot Range:</div><div style="position:absolute;left:531px;top:123px;width:56px;height:20px;background:#fff;border:1px solid #000"></div><div class="t" style="left:534px;top:128px;font-size:12px;color:#000">190.0</div><div style="position:absolute;left:589px;top:123px;width:12px;height:10px;background:#ece9d8;box-shadow:inset 1px 1px 0 #fff,inset -1px -1px 0 #716f64,inset -2px -2px 0 #aca899"></div><div style="position:absolute;left:589px;top:133px;width:12px;height:10px;background:#ece9d8;box-shadow:inset 1px 1px 0 #fff,inset -1px -1px 0 #716f64,inset -2px -2px 0 #aca899"></div><svg class="a" style="left:589px;top:123px" width="12" height="20" shape-rendering="crispEdges"><path d="M4 6h5v-1h-1v-1h-1v-1h-1v1h-1v1h-1z" fill="#000"/><path d="M4 14h5v1h-1v1h-1v1h-1v-1h-1v-1h-1z" fill="#000"/></svg><div class="t" style="left:614px;top:129px;font-size:12px;color:#000">Peak Hold:</div><div style="position:absolute;left:677px;top:122px;width:71px;height:23px;background:#fff;box-shadow:inset 1px 1px 0 #aca899,inset 2px 2px 0 #716f64,inset -1px -1px 0 #fff,inset -2px -2px 0 #ece9d8"></div><div style="position:absolute;left:729px;top:124px;width:17px;height:19px;background:#ece9d8;box-shadow:inset 1px 1px 0 #fff,inset -1px -1px 0 #716f64,inset -2px -2px 0 #aca899"></div><svg class="a" style="left:729px;top:124px" width="17" height="19" shape-rendering="crispEdges"><path d="M5 8h7v1h-1v1h-1v1h-1v1h-1v1h-1v-1h-1v-1h-1v-1h-1v-1h-1z" fill="#000"/></svg><div class="t" style="left:682px;top:128px;font-size:12px;color:#000">Off</div><div class="t" style="left:481px;top:152px;font-size:12px;color:#000">Left</div><div style="position:absolute;left:8px;top:152px;width:10px;height:10px;border:1px solid #000;background:#fff"></div><div style="position:absolute;left:10px;top:154px;width:6px;height:6px;background:#f4f2e8"></div><div style="position:absolute;left:11px;top:157px;width:5px;height:1px;background:#000"></div><div style="position:absolute;left:932px;top:696px;width:10px;height:10px;border:1px solid #000;background:#fff"></div><div style="position:absolute;left:934px;top:698px;width:6px;height:6px;background:#f4f2e8"></div><div style="position:absolute;left:934px;top:700px;width:6px;height:1px;background:#000"></div><div style="position:absolute;left:936px;top:698px;width:1px;height:5px;background:#000"></div><div style="position:absolute;left:1008px;top:696px;width:10px;height:10px;border:1px solid #000;background:#fff"></div><div style="position:absolute;left:1010px;top:698px;width:6px;height:6px;background:#f4f2e8"></div><div style="position:absolute;left:1011px;top:701px;width:5px;height:1px;background:#000"></div><svg class="a" style="left:0;top:0" width="1024" height="768" shape-rendering="crispEdges"><rect x="64" y="166" width="854" height="514" fill="#aca899"/><rect x="66" y="168" width="852" height="512" fill="#fff"/><rect x="66" y="168" width="850" height="498" fill="#ffffe1"/><rect x="66" y="194" width="850" height="1" fill="#c0c0c0"/><rect x="66" y="220" width="850" height="1" fill="#c0c0c0"/><rect x="66" y="246" width="850" height="1" fill="#c0c0c0"/><rect x="66" y="272" width="850" height="1" fill="#c0c0c0"/><rect x="66" y="299" width="850" height="1" fill="#c0c0c0"/><rect x="66" y="325" width="850" height="1" fill="#c0c0c0"/><rect x="66" y="351" width="850" height="1" fill="#c0c0c0"/><rect x="66" y="377" width="850" height="1" fill="#c0c0c0"/><rect x="66" y="403" width="850" height="1" fill="#c0c0c0"/><rect x="66" y="430" width="850" height="1" fill="#c0c0c0"/><rect x="66" y="456" width="850" height="1" fill="#c0c0c0"/><rect x="66" y="482" width="850" height="1" fill="#c0c0c0"/><rect x="66" y="508" width="850" height="1" fill="#c0c0c0"/><rect x="66" y="534" width="850" height="1" fill="#c0c0c0"/><rect x="66" y="561" width="850" height="1" fill="#c0c0c0"/><rect x="66" y="587" width="850" height="1" fill="#c0c0c0"/><rect x="66" y="613" width="850" height="1" fill="#c0c0c0"/><rect x="66" y="639" width="850" height="1" fill="#c0c0c0"/><rect x="92" y="168" width="1" height="498" fill="#c0c0c0"/><rect x="92" y="678" width="1" height="3" fill="#000"/><rect x="118" y="168" width="1" height="498" fill="#c0c0c0"/><rect x="118" y="678" width="1" height="3" fill="#000"/><rect x="141" y="168" width="1" height="498" fill="#c0c0c0"/><rect x="141" y="678" width="1" height="3" fill="#000"/><rect x="162" y="168" width="1" height="498" fill="#c0c0c0"/><rect x="162" y="678" width="1" height="3" fill="#000"/><rect x="297" y="168" width="1" height="498" fill="#c0c0c0"/><rect x="297" y="678" width="1" height="3" fill="#000"/><rect x="376" y="168" width="1" height="498" fill="#c0c0c0"/><rect x="376" y="678" width="1" height="3" fill="#000"/><rect x="432" y="168" width="1" height="498" fill="#c0c0c0"/><rect x="432" y="678" width="1" height="3" fill="#000"/><rect x="476" y="168" width="1" height="498" fill="#c0c0c0"/><rect x="476" y="678" width="1" height="3" fill="#000"/><rect x="511" y="168" width="1" height="498" fill="#c0c0c0"/><rect x="511" y="678" width="1" height="3" fill="#000"/><rect x="541" y="168" width="1" height="498" fill="#c0c0c0"/><rect x="541" y="678" width="1" height="3" fill="#000"/><rect x="567" y="168" width="1" height="498" fill="#c0c0c0"/><rect x="567" y="678" width="1" height="3" fill="#000"/><rect x="590" y="168" width="1" height="498" fill="#c0c0c0"/><rect x="590" y="678" width="1" height="3" fill="#000"/><rect x="611" y="168" width="1" height="498" fill="#c0c0c0"/><rect x="611" y="678" width="1" height="3" fill="#000"/><rect x="746" y="168" width="1" height="498" fill="#c0c0c0"/><rect x="746" y="678" width="1" height="3" fill="#000"/><rect x="825" y="168" width="1" height="498" fill="#c0c0c0"/><rect x="825" y="678" width="1" height="3" fill="#000"/><rect x="881" y="168" width="1" height="498" fill="#c0c0c0"/><rect x="881" y="678" width="1" height="3" fill="#000"/><rect x="64" y="168" width="2" height="1" fill="#000"/><rect x="64" y="194" width="2" height="1" fill="#000"/><rect x="64" y="220" width="2" height="1" fill="#000"/><rect x="64" y="246" width="2" height="1" fill="#000"/><rect x="64" y="272" width="2" height="1" fill="#000"/><rect x="64" y="299" width="2" height="1" fill="#000"/><rect x="64" y="325" width="2" height="1" fill="#000"/><rect x="64" y="351" width="2" height="1" fill="#000"/><rect x="64" y="377" width="2" height="1" fill="#000"/><rect x="64" y="403" width="2" height="1" fill="#000"/><rect x="64" y="430" width="2" height="1" fill="#000"/><rect x="64" y="456" width="2" height="1" fill="#000"/><rect x="64" y="482" width="2" height="1" fill="#000"/><rect x="64" y="508" width="2" height="1" fill="#000"/><rect x="64" y="534" width="2" height="1" fill="#000"/><rect x="64" y="561" width="2" height="1" fill="#000"/><rect x="64" y="587" width="2" height="1" fill="#000"/><rect x="64" y="613" width="2" height="1" fill="#000"/><rect x="64" y="639" width="2" height="1" fill="#000"/><rect x="64" y="665" width="2" height="1" fill="#000"/></svg><div class="t" style="left:0px;width:60px;text-align:right;top:163px;font-size:12px;letter-spacing:0.15px;color:#000">10.0</div><div class="t" style="left:0px;width:60px;text-align:right;top:189px;font-size:12px;letter-spacing:0.15px;color:#000">0.0</div><div class="t" style="left:0px;width:60px;text-align:right;top:215px;font-size:12px;letter-spacing:0.15px;color:#000">-10.0</div><div class="t" style="left:0px;width:60px;text-align:right;top:241px;font-size:12px;letter-spacing:0.15px;color:#000">-20.0</div><div class="t" style="left:0px;width:60px;text-align:right;top:267px;font-size:12px;letter-spacing:0.15px;color:#000">-30.0</div><div class="t" style="left:0px;width:60px;text-align:right;top:294px;font-size:12px;letter-spacing:0.15px;color:#000">-40.0</div><div class="t" style="left:0px;width:60px;text-align:right;top:320px;font-size:12px;letter-spacing:0.15px;color:#000">-50.0</div><div class="t" style="left:0px;width:60px;text-align:right;top:346px;font-size:12px;letter-spacing:0.15px;color:#000">-60.0</div><div class="t" style="left:0px;width:60px;text-align:right;top:372px;font-size:12px;letter-spacing:0.15px;color:#000">-70.0</div><div class="t" style="left:0px;width:60px;text-align:right;top:398px;font-size:12px;letter-spacing:0.15px;color:#000">-80.0</div><div class="t" style="left:0px;width:60px;text-align:right;top:425px;font-size:12px;letter-spacing:0.15px;color:#000">-90.0</div><div class="t" style="left:0px;width:60px;text-align:right;top:451px;font-size:12px;letter-spacing:0.15px;color:#000">-100.0</div><div class="t" style="left:0px;width:60px;text-align:right;top:477px;font-size:12px;letter-spacing:0.15px;color:#000">-110.0</div><div class="t" style="left:0px;width:60px;text-align:right;top:503px;font-size:12px;letter-spacing:0.15px;color:#000">-120.0</div><div class="t" style="left:0px;width:60px;text-align:right;top:529px;font-size:12px;letter-spacing:0.15px;color:#000">-130.0</div><div class="t" style="left:0px;width:60px;text-align:right;top:556px;font-size:12px;letter-spacing:0.15px;color:#000">-140.0</div><div class="t" style="left:0px;width:60px;text-align:right;top:582px;font-size:12px;letter-spacing:0.15px;color:#000">-150.0</div><div class="t" style="left:0px;width:60px;text-align:right;top:608px;font-size:12px;letter-spacing:0.15px;color:#000">-160.0</div><div class="t" style="left:0px;width:60px;text-align:right;top:634px;font-size:12px;letter-spacing:0.15px;color:#000">-170.0</div><div class="t" style="left:0px;width:60px;text-align:right;top:660px;font-size:12px;letter-spacing:0.15px;color:#000">-180.0</div><div class="t" style="left:77px;width:81px;text-align:center;top:683px;font-size:12px;color:#000">800</div><div class="t" style="left:121px;width:81px;text-align:center;top:683px;font-size:12px;color:#000">1.0k</div><div class="t" style="left:256px;width:81px;text-align:center;top:683px;font-size:12px;color:#000">2.0k</div><div class="t" style="left:335px;width:81px;text-align:center;top:683px;font-size:12px;color:#000">3.0k</div><div class="t" style="left:391px;width:81px;text-align:center;top:683px;font-size:12px;color:#000">4.0k</div><div class="t" style="left:435px;width:81px;text-align:center;top:683px;font-size:12px;color:#000">5.0k</div><div class="t" style="left:470px;width:81px;text-align:center;top:683px;font-size:12px;color:#000">6.0k</div><div class="t" style="left:526px;width:81px;text-align:center;top:683px;font-size:12px;color:#000">8.0k</div><div class="t" style="left:570px;width:81px;text-align:center;top:683px;font-size:12px;color:#000">10.0k</div><div class="t" style="left:705px;width:81px;text-align:center;top:683px;font-size:12px;color:#000">20.0k</div><div class="t" style="left:784px;width:81px;text-align:center;top:683px;font-size:12px;color:#000">30.0k</div><div class="t" style="left:840px;width:81px;text-align:center;top:683px;font-size:12px;color:#000">40.0k</div><div class="t" style="left:471px;top:695px;font-size:12px;color:#000">Frequency (Hz)</div><div class="t" style="left:10px;top:448px;font-size:13px;color:#000;transform:rotate(-90deg);transform-origin:left top;letter-spacing:0.2px">dBV rms</div><div class="t" style="left:886px;top:169px;font-family:'Liberation Serif',serif;font-style:italic;font-weight:bold;font-size:23px;color:#7a7a7a">S</div><div class="t" style="left:900px;top:175px;font-family:'Liberation Serif',serif;font-style:italic;font-size:17px;color:#808080">+</div><div style="position:absolute;left:66px;top:666px;width:850px;height:12px;background-color:#f6f5ef;background-image:repeating-conic-gradient(#ece9d8 0 25%,#fff 0 50%);background-size:2px 2px"></div><div style="position:absolute;left:66px;top:666px;width:17px;height:12px;background:#ece9d8;box-shadow:inset 1px 1px 0 #fff,inset -1px -1px 0 #716f64,inset -2px -2px 0 #aca899"></div><svg class="a" style="left:66px;top:666px" width="17" height="12" shape-rendering="crispEdges"><path d="M6 5h1v-1h1v-1h1v5h-1v-1h-1v-1h-1z" fill="#000"/></svg><div style="position:absolute;left:882px;top:666px;width:16px;height:12px;background:#ece9d8;box-shadow:inset 1px 1px 0 #fff,inset -1px -1px 0 #716f64,inset -2px -2px 0 #aca899"></div><div style="position:absolute;left:898px;top:666px;width:18px;height:12px;background:#ece9d8;box-shadow:inset 1px 1px 0 #fff,inset -1px -1px 0 #716f64,inset -2px -2px 0 #aca899"></div><svg class="a" style="left:898px;top:666px" width="18" height="12" shape-rendering="crispEdges"><path d="M11 5h-1v-1h-1v-1h-1v5h1v-1h1v-1h1z" fill="#000"/></svg><svg class="a" style="left:0;top:0" width="1024" height="768" shape-rendering="crispEdges"><defs><clipPath id="pc"><rect x="66" y="168" width="850" height="498"/></clipPath></defs><path clip-path="url(#pc)" d="M66.5 571.5H66.5V579.5H67.5V581.5H68.5V582.5H69.5V583.5H69.5V586.5H71.5V596.5H73.5V588.5H74.5V591.5H74.5V584.5H75.5V584.5H75.5V585.5H76.5V588.5H76.5V578.5H77.5V580.5H77.5V578.5H78.5V595.5H79.5V583.5H79.5V584.5H80.5V589.5H81.5V572.5H83.5V593.5H83.5V587.5H84.5V595.5H85.5V576.5H85.5V576.5H86.5V576.5H86.5V595.5H87.5V583.5H87.5V586.5H88.5V587.5H89.5V590.5H89.5V583.5H90.5V580.5H90.5V580.5H91.5V585.5H93.5V586.5H93.5V580.5H94.5V581.5H96.5V581.5H96.5V583.5H97.5V593.5H97.5V585.5H98.5V584.5H98.5V578.5H99.5V580.5H100.5V586.5H101.5V580.5H103.5V587.5H103.5V592.5H105.5V595.5H105.5V579.5H106.5V584.5H106.5V584.5H108.5V581.5H108.5V578.5H110.5V582.5H111.5V586.5H111.5V584.5H113.5V590.5H114.5V583.5H115.5V584.5H115.5V586.5H116.5V584.5H117.5V595.5H117.5V572.5H118.5V580.5H119.5V581.5H119.5V590.5H121.5V577.5H121.5V578.5H122.5V577.5H122.5V585.5H123.5V582.5H125.5V579.5H127.5V572.5H127.5V577.5H129.5V570.5H129.5V585.5H130.5V571.5H131.5V580.5H132.5V581.5H134.5V575.5H135.5V588.5H135.5V583.5H136.5V580.5H136.5V577.5H137.5V578.5H138.5V586.5H139.5V580.5H139.5V580.5H140.5V578.5H141.5V586.5H141.5V579.5H142.5V572.5H142.5V587.5H144.5V582.5H144.5V572.5H147.5V572.5H147.5V567.5H149.5V567.5H149.5V558.5H150.5V558.5H150.5V553.5H151.5V553.5H151.5V556.5H152.5V556.5H152.5V553.5H153.5V553.5H153.5V544.5H155.5V544.5H155.5V535.5H156.5V535.5H156.5V520.5H157.5V520.5H157.5V509.5H158.5V509.5H158.5V497.5H159.5V497.5H159.5V481.5H160.5V481.5H160.5V461.5H161.5V461.5H161.5V432.5H162.5V432.5H162.5V379.5H163.5V379.5H163.5V225.5H164.5V225.5H164.5V232.5H165.5V232.5H165.5V394.5H166.5V394.5H166.5V439.5H167.5V439.5H167.5V465.5H168.5V465.5H168.5V485.5H169.5V485.5H169.5V500.5H170.5V500.5H170.5V513.5H171.5V513.5H171.5V532.5H173.5V532.5H173.5V548.5H175.5V548.5H175.5V557.5H178.5V557.5H178.5V563.5H180.5V563.5H180.5V566.5H182.5V566.5H182.5V570.5H183.5V570.5H183.5V567.5H184.5V567.5H184.5V574.5H186.5V574.5H186.5V571.5H187.5V571.5H187.5V580.5H187.5V575.5H188.5V585.5H188.5V571.5H190.5V581.5H192.5V583.5H192.5V585.5H193.5V574.5H193.5V584.5H194.5V588.5H194.5V569.5H195.5V590.5H195.5V582.5H196.5V576.5H197.5V578.5H197.5V584.5H198.5V584.5H199.5V587.5H199.5V582.5H200.5V575.5H202.5V572.5H203.5V580.5H203.5V581.5H204.5V582.5H205.5V584.5H206.5V580.5H207.5V575.5H208.5V580.5H209.5V577.5H211.5V571.5H211.5V576.5H212.5V573.5H213.5V582.5H215.5V579.5H217.5V577.5H219.5V581.5H221.5V576.5H222.5V574.5H222.5V582.5H223.5V589.5H223.5V582.5H224.5V582.5H225.5V584.5H225.5V584.5H226.5V585.5H227.5V568.5H228.5V581.5H228.5V576.5H229.5V579.5H230.5V576.5H231.5V578.5H233.5V588.5H233.5V569.5H234.5V582.5H235.5V586.5H236.5V575.5H238.5V579.5H239.5V586.5H240.5V583.5H242.5V577.5H242.5V580.5H243.5V585.5H244.5V577.5H244.5V572.5H245.5V572.5H246.5V581.5H246.5V588.5H247.5V578.5H247.5V578.5H248.5V576.5H248.5V580.5H249.5V576.5H250.5V582.5H251.5V575.5H251.5V575.5H252.5V572.5H253.5V574.5H255.5V578.5H257.5V584.5H257.5V590.5H258.5V580.5H258.5V579.5H259.5V576.5H260.5V584.5H261.5V584.5H261.5V582.5H263.5V587.5H264.5V580.5H265.5V574.5H265.5V582.5H266.5V581.5H267.5V582.5H268.5V583.5H270.5V581.5H272.5V581.5H272.5V580.5H273.5V576.5H274.5V588.5H276.5V581.5H276.5V572.5H277.5V582.5H277.5V583.5H278.5V585.5H280.5V585.5H281.5V575.5H282.5V581.5H284.5V576.5H285.5V571.5H287.5V586.5H288.5V573.5H289.5V584.5H289.5V579.5H290.5V580.5H291.5V587.5H291.5V577.5H292.5V574.5H293.5V577.5H294.5V581.5H295.5V568.5H296.5V579.5H296.5V581.5H298.5V580.5H298.5V447.5H299.5V447.5H299.5V444.5H300.5V444.5H300.5V582.5H302.5V582.5H302.5V582.5H303.5V579.5H303.5V575.5H304.5V580.5H305.5V577.5H306.5V578.5H307.5V579.5H307.5V577.5H308.5V582.5H308.5V581.5H309.5V585.5H309.5V576.5H310.5V581.5H312.5V579.5H312.5V571.5H313.5V582.5H315.5V571.5H317.5V582.5H318.5V577.5H319.5V581.5H320.5V578.5H320.5V576.5H321.5V574.5H322.5V583.5H324.5V580.5H326.5V582.5H327.5V579.5H327.5V586.5H328.5V576.5H329.5V575.5H329.5V588.5H331.5V579.5H331.5V583.5H332.5V581.5H333.5V582.5H334.5V581.5H335.5V577.5H335.5V580.5H336.5V581.5H337.5V579.5H338.5V581.5H339.5V584.5H340.5V584.5H341.5V580.5H343.5V579.5H343.5V581.5H345.5V584.5H345.5V583.5H346.5V578.5H347.5V587.5H347.5V579.5H348.5V579.5H349.5V582.5H349.5V583.5H350.5V585.5H350.5V584.5H351.5V588.5H352.5V577.5H353.5V572.5H353.5V586.5H355.5V578.5H355.5V583.5H356.5V578.5H356.5V582.5H357.5V573.5H358.5V578.5H358.5V580.5H359.5V572.5H359.5V575.5H360.5V580.5H361.5V585.5H362.5V582.5H362.5V586.5H364.5V583.5H364.5V579.5H365.5V578.5H366.5V580.5H366.5V575.5H367.5V574.5H367.5V588.5H368.5V574.5H368.5V579.5H369.5V574.5H370.5V584.5H372.5V588.5H373.5V574.5H374.5V576.5H375.5V582.5H377.5V581.5H377.5V582.5H378.5V581.5H378.5V449.5H379.5V449.5H379.5V578.5H379.5V576.5H379.5V574.5H380.5V575.5H380.5V581.5H382.5V582.5H382.5V582.5H383.5V579.5H383.5V575.5H384.5V580.5H384.5V582.5H385.5V573.5H385.5V578.5H386.5V587.5H386.5V574.5H387.5V584.5H388.5V579.5H388.5V587.5H389.5V578.5H390.5V586.5H390.5V580.5H391.5V576.5H391.5V581.5H392.5V578.5H393.5V579.5H393.5V580.5H394.5V588.5H396.5V578.5H396.5V580.5H397.5V583.5H397.5V573.5H399.5V579.5H399.5V586.5H400.5V571.5H400.5V582.5H401.5V578.5H402.5V587.5H403.5V581.5H404.5V585.5H404.5V582.5H405.5V577.5H405.5V578.5H406.5V584.5H406.5V579.5H407.5V578.5H407.5V587.5H408.5V578.5H408.5V575.5H409.5V584.5H410.5V587.5H410.5V579.5H411.5V579.5H412.5V584.5H412.5V578.5H413.5V583.5H413.5V582.5H414.5V586.5H415.5V576.5H416.5V586.5H416.5V585.5H417.5V583.5H417.5V573.5H418.5V584.5H418.5V580.5H419.5V582.5H419.5V588.5H420.5V584.5H421.5V581.5H422.5V576.5H422.5V584.5H423.5V580.5H424.5V579.5H425.5V579.5H425.5V578.5H426.5V578.5H427.5V578.5H428.5V578.5H429.5V577.5H429.5V579.5H430.5V573.5H432.5V579.5H432.5V585.5H433.5V577.5H433.5V580.5H434.5V579.5H434.5V508.5H435.5V508.5H435.5V579.5H435.5V578.5H435.5V581.5H437.5V579.5H438.5V578.5H440.5V587.5H441.5V581.5H441.5V576.5H443.5V572.5H443.5V576.5H444.5V580.5H445.5V580.5H447.5V577.5H448.5V585.5H448.5V573.5H449.5V575.5H449.5V577.5H450.5V579.5H451.5V579.5H452.5V584.5H453.5V585.5H454.5V587.5H454.5V574.5H455.5V582.5H456.5V587.5H456.5V579.5H458.5V574.5H458.5V581.5H460.5V575.5H462.5V578.5H462.5V585.5H464.5V581.5H465.5V577.5H466.5V584.5H466.5V574.5H467.5V580.5H467.5V577.5H468.5V574.5H468.5V576.5H469.5V580.5H471.5V581.5H473.5V575.5H473.5V578.5H475.5V573.5H475.5V579.5H476.5V576.5H477.5V579.5H477.5V495.5H478.5V495.5H478.5V576.5H478.5V580.5H479.5V575.5H480.5V581.5H480.5V576.5H481.5V583.5H482.5V578.5H482.5V586.5H483.5V574.5H484.5V582.5H484.5V586.5H486.5V577.5H486.5V576.5H488.5V583.5H488.5V582.5H489.5V583.5H490.5V574.5H492.5V581.5H492.5V580.5H493.5V579.5H494.5V581.5H495.5V574.5H495.5V571.5H496.5V575.5H496.5V586.5H497.5V577.5H497.5V577.5H499.5V573.5H499.5V577.5H500.5V577.5H502.5V581.5H502.5V576.5H503.5V584.5H503.5V575.5H505.5V577.5H506.5V578.5H506.5V574.5H508.5V580.5H508.5V582.5H509.5V574.5H509.5V572.5H510.5V581.5H511.5V573.5H512.5V580.5H513.5V575.5H513.5V556.5H513.5V579.5H513.5V582.5H513.5V579.5H514.5V571.5H514.5V575.5H515.5V578.5H515.5V583.5H516.5V579.5H518.5V578.5H518.5V578.5H519.5V575.5H519.5V579.5H520.5V582.5H520.5V575.5H521.5V578.5H522.5V580.5H522.5V575.5H523.5V582.5H523.5V576.5H525.5V576.5H525.5V577.5H526.5V580.5H527.5V574.5H527.5V579.5H528.5V582.5H529.5V578.5H530.5V577.5H530.5V576.5H531.5V580.5H532.5V580.5H532.5V578.5H534.5V577.5H535.5V577.5H535.5V582.5H536.5V580.5H536.5V575.5H537.5V576.5H538.5V576.5H539.5V574.5H539.5V569.5H540.5V573.5H542.5V578.5H542.5V577.5H543.5V580.5H543.5V529.5H544.5V529.5H544.5V578.5H544.5V576.5H544.5V573.5H545.5V577.5H546.5V578.5H547.5V580.5H548.5V579.5H548.5V577.5H549.5V582.5H549.5V574.5H550.5V580.5H550.5V582.5H551.5V575.5H552.5V570.5H552.5V576.5H554.5V577.5H554.5V577.5H555.5V573.5H555.5V576.5H556.5V577.5H557.5V573.5H557.5V578.5H558.5V576.5H559.5V581.5H559.5V577.5H560.5V578.5H560.5V572.5H561.5V580.5H561.5V575.5H562.5V578.5H562.5V574.5H564.5V573.5H565.5V578.5H566.5V575.5H568.5V576.5H569.5V574.5H569.5V567.5H569.5V576.5H569.5V580.5H569.5V575.5H570.5V577.5H570.5V574.5H571.5V576.5H571.5V574.5H572.5V576.5H572.5V578.5H573.5V577.5H573.5V572.5H574.5V574.5H575.5V575.5H575.5V577.5H576.5V572.5H576.5V576.5H577.5V576.5H577.5V576.5H578.5V574.5H579.5V575.5H579.5V572.5H581.5V576.5H581.5V570.5H582.5V572.5H583.5V574.5H583.5V577.5H585.5V571.5H586.5V580.5H586.5V573.5H587.5V575.5H588.5V576.5H588.5V580.5H589.5V573.5H589.5V575.5H590.5V573.5H590.5V572.5H591.5V579.5H592.5V574.5H592.5V556.5H592.5V579.5H592.5V569.5H592.5V577.5H593.5V574.5H594.5V576.5H595.5V574.5H595.5V573.5H596.5V574.5H597.5V575.5H597.5V578.5H598.5V576.5H599.5V576.5H599.5V575.5H600.5V574.5H601.5V579.5H601.5V571.5H602.5V570.5H602.5V575.5H603.5V575.5H604.5V579.5H604.5V575.5H606.5V570.5H607.5V571.5H609.5V571.5H609.5V572.5H610.5V578.5H610.5V579.5H612.5V575.5H613.5V571.5H614.5V577.5H616.5V574.5H616.5V573.5H617.5V574.5H617.5V568.5H618.5V578.5H618.5V575.5H619.5V573.5H619.5V579.5H621.5V572.5H621.5V577.5H622.5V571.5H623.5V577.5H624.5V580.5H624.5V579.5H625.5V576.5H625.5V576.5H626.5V577.5H627.5V578.5H627.5V572.5H628.5V575.5H628.5V580.5H629.5V577.5H629.5V576.5H631.5V577.5H631.5V577.5H632.5V572.5H633.5V570.5H633.5V573.5H634.5V580.5H634.5V572.5H636.5V577.5H636.5V570.5H637.5V575.5H637.5V575.5H638.5V574.5H638.5V572.5H639.5V576.5H639.5V580.5H640.5V576.5H641.5V570.5H641.5V576.5H642.5V569.5H643.5V571.5H644.5V577.5H645.5V574.5H646.5V577.5H648.5V572.5H648.5V572.5H649.5V573.5H650.5V575.5H651.5V570.5H652.5V573.5H652.5V576.5H653.5V576.5H653.5V571.5H654.5V574.5H656.5V576.5H656.5V572.5H657.5V577.5H657.5V574.5H659.5V570.5H659.5V576.5H660.5V571.5H660.5V568.5H661.5V569.5H661.5V579.5H662.5V571.5H663.5V577.5H665.5V571.5H666.5V571.5H666.5V576.5H667.5V570.5H668.5V574.5H668.5V577.5H669.5V577.5H670.5V574.5H671.5V575.5H673.5V576.5H674.5V576.5H676.5V573.5H676.5V577.5H677.5V573.5H678.5V576.5H679.5V569.5H680.5V573.5H682.5V571.5H682.5V568.5H683.5V572.5H683.5V573.5H684.5V572.5H685.5V575.5H685.5V568.5H686.5V577.5H687.5V570.5H687.5V574.5H688.5V574.5H690.5V574.5H690.5V576.5H692.5V574.5H694.5V572.5H694.5V569.5H695.5V569.5H695.5V572.5H696.5V570.5H696.5V572.5H697.5V577.5H698.5V576.5H698.5V576.5H699.5V578.5H699.5V577.5H700.5V576.5H700.5V579.5H701.5V571.5H702.5V575.5H702.5V571.5H704.5V571.5H704.5V570.5H706.5V574.5H706.5V572.5H707.5V571.5H707.5V575.5H709.5V571.5H710.5V569.5H711.5V576.5H711.5V576.5H712.5V574.5H712.5V575.5H713.5V572.5H714.5V577.5H714.5V577.5H715.5V570.5H715.5V577.5H717.5V572.5H719.5V573.5H719.5V571.5H720.5V575.5H721.5V574.5H722.5V573.5H722.5V571.5H723.5V575.5H724.5V579.5H725.5V572.5H726.5V574.5H727.5V573.5H727.5V572.5H729.5V571.5H729.5V572.5H730.5V574.5H731.5V571.5H731.5V570.5H732.5V575.5H732.5V569.5H733.5V573.5H733.5V573.5H735.5V573.5H736.5V573.5H737.5V574.5H737.5V571.5H738.5V572.5H738.5V572.5H739.5V572.5H740.5V578.5H740.5V575.5H741.5V574.5H742.5V577.5H743.5V576.5H744.5V569.5H744.5V569.5H746.5V575.5H746.5V573.5H748.5V573.5H749.5V571.5H749.5V575.5H751.5V574.5H753.5V572.5H753.5V573.5H754.5V575.5H754.5V572.5H755.5V577.5H756.5V569.5H758.5V572.5H758.5V577.5H759.5V571.5H759.5V574.5H760.5V572.5H760.5V573.5H762.5V570.5H762.5V572.5H763.5V575.5H763.5V574.5H764.5V573.5H764.5V577.5H765.5V568.5H765.5V576.5H766.5V575.5H767.5V572.5H767.5V572.5H768.5V576.5H768.5V570.5H769.5V573.5H769.5V575.5H770.5V574.5H771.5V571.5H772.5V574.5H772.5V578.5H773.5V573.5H773.5V575.5H774.5V569.5H774.5V573.5H775.5V572.5H777.5V578.5H778.5V574.5H779.5V570.5H781.5V575.5H782.5V569.5H783.5V574.5H783.5V572.5H784.5V573.5H785.5V575.5H785.5V570.5H786.5V575.5H786.5V574.5H788.5V574.5H789.5V572.5H791.5V575.5H791.5V571.5H792.5V570.5H792.5V576.5H794.5V572.5H794.5V571.5H795.5V573.5H795.5V572.5H796.5V572.5H796.5V574.5H797.5V571.5H798.5V573.5H799.5V567.5H800.5V574.5H801.5V573.5H801.5V570.5H802.5V574.5H802.5V571.5H803.5V571.5H803.5V571.5H805.5V570.5H806.5V574.5H807.5V573.5H807.5V572.5H808.5V571.5H809.5V572.5H810.5V576.5H811.5V575.5H811.5V570.5H812.5V572.5H813.5V576.5H814.5V571.5H815.5V575.5H815.5V570.5H816.5V576.5H816.5V573.5H817.5V573.5H817.5V574.5H818.5V573.5H818.5V575.5H819.5V576.5H821.5V577.5H822.5V570.5H824.5V572.5H825.5V575.5H825.5V572.5H826.5V571.5H826.5V574.5H827.5V570.5H828.5V573.5H828.5V574.5H830.5V573.5H831.5V575.5H832.5V575.5H833.5V576.5H834.5V574.5H834.5V567.5H835.5V570.5H836.5V576.5H837.5V574.5H838.5V574.5H838.5V577.5H839.5V575.5H839.5V574.5H840.5V572.5H841.5V573.5H841.5V571.5H843.5V568.5H845.5V573.5H846.5V573.5H847.5V569.5H848.5V569.5H850.5V575.5H850.5V546.5H850.5V575.5H850.5V577.5H850.5V576.5H852.5V577.5H852.5V574.5H853.5V574.5H853.5V552.5H853.5V573.5H853.5V569.5H855.5V571.5H855.5V576.5H857.5V574.5H858.5V572.5H858.5V573.5H859.5V570.5H859.5V571.5H860.5V570.5H862.5V572.5H862.5V573.5H863.5V573.5H864.5V571.5H864.5V570.5H865.5V573.5H865.5V570.5H866.5V570.5H866.5V575.5H867.5V570.5H868.5V571.5H868.5V572.5H870.5V573.5H870.5V568.5H872.5V575.5H872.5V574.5H873.5V574.5H873.5V571.5H874.5V568.5H875.5V571.5H875.5V570.5H876.5V575.5H876.5V573.5H877.5V575.5H877.5V566.5H879.5V571.5H879.5V570.5H880.5V570.5H881.5V571.5H882.5V568.5H883.5V570.5H883.5V571.5H884.5V569.5H884.5V572.5H885.5V570.5H885.5V566.5H886.5V569.5H887.5V571.5H888.5V570.5H888.5V569.5H889.5V564.5H889.5V567.5H890.5V572.5H892.5V565.5H892.5V566.5H893.5V573.5H893.5V566.5H894.5V568.5H895.5V569.5H895.5V568.5H896.5V567.5H896.5V569.5H897.5V565.5H897.5V568.5H898.5V568.5H898.5V568.5H899.5V571.5H899.5V566.5H900.5V566.5H901.5V565.5H901.5V567.5H902.5V568.5H904.5V572.5H905.5V569.5H906.5V567.5H907.5V570.5H908.5V572.5H908.5V566.5H909.5V565.5H909.5V569.5H910.5V565.5H910.5V565.5H911.5V566.5H912.5V564.5H912.5V566.5H913.5V566.5H914.5V569.5H915.5V567.5" fill="none" stroke="#0000ff" stroke-width="1"/></svg><div class="t" style="left:540px;top:326px;font-size:20px;color:#000;letter-spacing:0.45px">YES-5</div><div class="t" style="left:540px;top:350px;font-size:20px;color:#000;letter-spacing:0.65px">10ГДШ-2  4Ом  12W</div><div class="t" style="left:540px;top:374px;font-size:20px;color:#000;letter-spacing:0.3px">провод - 3м - 0.75мм*</div><div class="t" style="left:540px;top:398px;font-size:20px;color:#000;letter-spacing:0.32px">с ПОС  на клемм. 10ГДШ-2</div><div style="position:absolute;left:256px;top:196px;width:219px;height:74px;background:#0a5ae6;border:1px solid #0838b8;border-radius:1px 1px 0 0"></div><div style="position:absolute;left:257px;top:197px;width:217px;height:21px;background:linear-gradient(to bottom,#0c66f6 0px,#4a98ff 2px,#2276f6 5px,#005aee 10px,#0058ec 18px,#0a56e0 22px)"></div><div class="t" style="left:260px;top:204px;font-size:11px;font-weight:bold;color:#fff;letter-spacing:0.3px">THD</div><div style="position:absolute;left:456px;top:202px;width:13px;height:13px;background:linear-gradient(135deg,#f08a6a,#d84a22);border:1px solid #fff;border-radius:2px"></div><svg class="a" style="left:456px;top:202px" width="13" height="13"><path d="M3.5 3.5L9.5 9.5M9.5 3.5L3.5 9.5" stroke="#fff" stroke-width="1.8"/></svg><div style="position:absolute;left:260px;top:218px;width:211px;height:48px;background:#fff;border-top:1px solid #000;border-left:1px solid #000"></div><div class="t" style="left:263px;top:226px;font-size:37px;color:#000;letter-spacing:0.4px;-webkit-text-stroke:0.3px #000">0.008608 %</div><div style="position:absolute;left:541px;top:196px;width:203px;height:74px;background:#7a96e0;border:1px solid #6a84d4;border-radius:1px 1px 0 0"></div><div style="position:absolute;left:542px;top:197px;width:201px;height:21px;background:linear-gradient(to bottom,#7b94e2 0px,#a4bbef 2px,#8aa6e8 5px,#7b96e0 12px,#7d9ce4 22px)"></div><div class="t" style="left:545px;top:204px;font-size:11px;font-weight:bold;color:#d8e2f8;letter-spacing:0.3px">Peak Amplitude</div><div style="position:absolute;left:725px;top:202px;width:13px;height:13px;background:linear-gradient(135deg,#c8909c,#b06878);border:1px solid #dde4f8;border-radius:2px"></div><svg class="a" style="left:725px;top:202px" width="13" height="13"><path d="M3.5 3.5L9.5 9.5M9.5 3.5L3.5 9.5" stroke="#fff" stroke-width="1.8"/></svg><div style="position:absolute;left:545px;top:218px;width:195px;height:48px;background:#fff;border-top:1px solid #000;border-left:1px solid #000"></div><div class="t" style="left:548px;top:226px;font-size:37px;color:#000;letter-spacing:0.8px;-webkit-text-stroke:0.3px #000">-</div><div class="t" style="left:562px;top:226px;font-size:37px;color:#000;letter-spacing:0.8px;-webkit-text-stroke:0.3px #000">1</div><div class="t" style="left:583px;top:226px;font-size:37px;color:#000;letter-spacing:0.8px;-webkit-text-stroke:0.3px #000">1</div><div class="t" style="left:604px;top:226px;font-size:37px;color:#000;letter-spacing:0.8px;-webkit-text-stroke:0.3px #000">.</div><div class="t" style="left:614px;top:226px;font-size:37px;color:#000;letter-spacing:0.8px;-webkit-text-stroke:0.3px #000">68 dBV</div><div style="position:absolute;left:564px;top:253px;width:7px;height:5px;background:#fff"></div><div style="position:absolute;left:575px;top:253px;width:8px;height:5px;background:#fff"></div><div style="position:absolute;left:585px;top:253px;width:7px;height:5px;background:#fff"></div><div style="position:absolute;left:596px;top:253px;width:8px;height:5px;background:#fff"></div><div class="t" style="left:944px;top:155px;font-size:12px;color:#000;text-decoration:underline">Overlays</div><div class="t" style="left:925px;top:186px;font-size:12px;color:#000;transform:rotate(-90deg);transform-origin:left top">Set</div><div class="t" style="left:940px;top:186px;font-size:12px;color:#000;transform:rotate(-90deg);transform-origin:left top">On</div><div style="position:absolute;left:923px;top:189px;width:14px;height:14px;background:#ece9d8;box-shadow:inset 1px 1px 0 #fff,inset -1px -1px 0 #716f64,inset -2px -2px 0 #aca899"></div><div class="t" style="left:923px;width:13px;text-align:center;top:190px;font-size:12px;color:#000">1</div><div style="position:absolute;left:940px;top:190px;width:13px;height:13px;background:#fff;box-shadow:inset 1px 1px 0 #aca899,inset 2px 2px 0 #716f64,inset -1px -1px 0 #fff,inset -2px -2px 0 #ece9d8"></div><div class="t" style="left:956px;top:191px;font-size:12px;color:#008000">Overlay 1</div><div style="position:absolute;left:923px;top:205px;width:14px;height:14px;background:#ece9d8;box-shadow:inset 1px 1px 0 #fff,inset -1px -1px 0 #716f64,inset -2px -2px 0 #aca899"></div><div class="t" style="left:923px;width:13px;text-align:center;top:206px;font-size:12px;color:#000">2</div><div style="position:absolute;left:940px;top:206px;width:13px;height:13px;background:#fff;box-shadow:inset 1px 1px 0 #aca899,inset 2px 2px 0 #716f64,inset -1px -1px 0 #fff,inset -2px -2px 0 #ece9d8"></div><div class="t" style="left:956px;top:207px;font-size:12px;color:#00a8a8">Overlay 2</div><div style="position:absolute;left:923px;top:221px;width:14px;height:14px;background:#ece9d8;box-shadow:inset 1px 1px 0 #fff,inset -1px -1px 0 #716f64,inset -2px -2px 0 #aca899"></div><div class="t" style="left:923px;width:13px;text-align:center;top:222px;font-size:12px;color:#000">3</div><div style="position:absolute;left:940px;top:222px;width:13px;height:13px;background:#fff;box-shadow:inset 1px 1px 0 #aca899,inset 2px 2px 0 #716f64,inset -1px -1px 0 #fff,inset -2px -2px 0 #ece9d8"></div><div class="t" style="left:956px;top:223px;font-size:12px;color:#800080">Overlay 3</div><div style="position:absolute;left:923px;top:237px;width:14px;height:14px;background:#ece9d8;box-shadow:inset 1px 1px 0 #fff,inset -1px -1px 0 #716f64,inset -2px -2px 0 #aca899"></div><div class="t" style="left:923px;width:13px;text-align:center;top:238px;font-size:12px;color:#000">4</div><div style="position:absolute;left:940px;top:238px;width:13px;height:13px;background:#fff;box-shadow:inset 1px 1px 0 #aca899,inset 2px 2px 0 #716f64,inset -1px -1px 0 #fff,inset -2px -2px 0 #ece9d8"></div><div class="t" style="left:956px;top:239px;font-size:12px;color:#ff00ff">Overlay 4</div><div style="position:absolute;left:923px;top:253px;width:14px;height:14px;background:#ece9d8;box-shadow:inset 1px 1px 0 #fff,inset -1px -1px 0 #716f64,inset -2px -2px 0 #aca899"></div><div class="t" style="left:923px;width:13px;text-align:center;top:254px;font-size:12px;color:#000">5</div><div style="position:absolute;left:940px;top:254px;width:13px;height:13px;background:#fff;box-shadow:inset 1px 1px 0 #aca899,inset 2px 2px 0 #716f64,inset -1px -1px 0 #fff,inset -2px -2px 0 #ece9d8"></div><div class="t" style="left:956px;top:255px;font-size:12px;color:#8b4513">Overlay 5</div><div style="position:absolute;left:923px;top:269px;width:14px;height:14px;background:#ece9d8;box-shadow:inset 1px 1px 0 #fff,inset -1px -1px 0 #716f64,inset -2px -2px 0 #aca899"></div><div class="t" style="left:923px;width:13px;text-align:center;top:270px;font-size:12px;color:#000">6</div><div style="position:absolute;left:940px;top:270px;width:13px;height:13px;background:#fff;box-shadow:inset 1px 1px 0 #aca899,inset 2px 2px 0 #716f64,inset -1px -1px 0 #fff,inset -2px -2px 0 #ece9d8"></div><div class="t" style="left:956px;top:271px;font-size:12px;color:#ff7f50">Overlay 6</div><div style="position:absolute;left:923px;top:285px;width:14px;height:14px;background:#ece9d8;box-shadow:inset 1px 1px 0 #fff,inset -1px -1px 0 #716f64,inset -2px -2px 0 #aca899"></div><div class="t" style="left:923px;width:13px;text-align:center;top:286px;font-size:12px;color:#000">C</div><div style="position:absolute;left:940px;top:286px;width:13px;height:13px;background:#fff;box-shadow:inset 1px 1px 0 #aca899,inset 2px 2px 0 #716f64,inset -1px -1px 0 #fff,inset -2px -2px 0 #ece9d8"></div><div class="t" style="left:956px;top:287px;font-size:12px;color:#000">Composite</div><div style="position:absolute;left:920px;top:302px;width:64px;height:18px;background:#ece9d8;box-shadow:inset 1px 1px 0 #fff,inset -1px -1px 0 #716f64,inset -2px -2px 0 #aca899"></div><div class="t" style="left:926px;top:305px;font-size:12px;color:#000">Options...</div><div style="position:absolute;left:0px;top:711px;width:1024px;height:27px;background:#ece9d8"></div><div style="position:absolute;left:0px;top:737px;width:1024px;height:1px;background:#fff"></div><div style="position:absolute;left:5px;top:713px;width:118px;height:18px;border:1px solid;border-color:#aca899 #f5f3ea #f5f3ea #aca899"></div><div class="t" style="left:9px;top:716px;font-size:12px;color:#000">Stopped</div><div style="position:absolute;left:125px;top:713px;width:101px;height:18px;border:1px solid;border-color:#aca899 #f5f3ea #f5f3ea #aca899"></div><div class="t" style="left:129px;top:716px;font-size:12px;color:#000">Real Time</div><div style="position:absolute;left:228px;top:713px;width:71px;height:18px;border:1px solid;border-color:#aca899 #f5f3ea #f5f3ea #aca899"></div><div class="t" style="left:232px;top:716px;font-size:12px;color:#000">96000 Hz</div><div style="position:absolute;left:301px;top:713px;width:51px;height:18px;border:1px solid;border-color:#aca899 #f5f3ea #f5f3ea #aca899"></div><div class="t" style="left:305px;top:716px;font-size:12px;color:#000">24 Bit</div><div style="position:absolute;left:354px;top:713px;width:51px;height:18px;border:1px solid;border-color:#aca899 #f5f3ea #f5f3ea #aca899"></div><div class="t" style="left:358px;top:716px;font-size:12px;color:#000">Stereo</div><div style="position:absolute;left:407px;top:713px;width:101px;height:18px;border:1px solid;border-color:#aca899 #f5f3ea #f5f3ea #aca899"></div><div class="t" style="left:411px;top:716px;font-size:12px;color:#000">FFT 131072 pts</div><div style="position:absolute;left:510px;top:713px;width:74px;height:18px;border:1px solid;border-color:#aca899 #f5f3ea #f5f3ea #aca899"></div><div class="t" style="left:514px;top:716px;font-size:12px;color:#000">Hanning</div><div style="position:absolute;left:586px;top:713px;width:435px;height:18px;border:1px solid;border-color:#aca899 #f5f3ea #f5f3ea #aca899"></div><div style="position:absolute;left:0px;top:738px;width:1024px;height:30px;background:linear-gradient(to bottom,#1c4ec8 0px,#1c4ec8 1px,#3a87e4 1px,#4290e6 2px,#2c70e2 3px,#1f55d4 4px,#1f56d4 10px,#2262dc 24px,#2464de 27px,#1a48b0 28px,#1a45a8 30px)"></div><div style="position:absolute;left:0px;top:738px;width:96px;height:30px;border-radius:0 9px 9px 0 / 0 15px 15px 0;background:linear-gradient(to bottom,#2f7f2f 0px,#66b266 1px,#5aac5a 3px,#3f9b3f 7px,#3d9d3d 14px,#3d9a3d 24px,#307e30 28px,#2a702a 30px);box-shadow:inset -3px 0 3px #2c7c2c"></div><div style="position:absolute;left:0px;top:711px;width:2px;height:27px;background:#aca899"></div><svg class="a" style="left:9px;top:742px" width="22" height="22" viewBox="0 0 20 20"><path d="M3 2.5q3-1.2 6 0l-1.2 6q-3-1.2-6 0z" fill="#f25a22"/><path d="M10 2.8q3 1.2 7 0l-1.2 6q-3 1.2-7 0z" fill="#7cc32a"/><path d="M1.6 9.6q3-1.2 6 0l-1.2 6q-3-1.2-6 0z" fill="#3f8de8"/><path d="M8.6 9.9q3 1.2 7 0l-1.2 6q-3 1.2-7 0z" fill="#fbc01a"/></svg><div class="t" style="left:35px;top:743px;font-size:19px;font-weight:bold;font-style:italic;color:#fff;text-shadow:1px 1px 1px #1a4a1a;transform:scaleX(0.87);transform-origin:left top">пуск</div><div style="position:absolute;left:105px;top:741px;width:160px;height:24px;border-radius:3px;background:#1e49b6;box-shadow:inset 1px 1px 0 #16389a,inset -1px -1px 0 #3e6fd8"></div><svg class="a" style="left:116px;top:746px" width="16" height="16" viewBox="0 0 16 16"><rect x="0" y="0" width="16" height="16" fill="#222"/><rect x="1" y="1" width="14" height="14" fill="#fff"/><rect x="3" y="1" width="1" height="14" fill="#d8d8d8"/><rect x="1" y="3" width="14" height="1" fill="#d8d8d8"/><rect x="6" y="1" width="1" height="14" fill="#d8d8d8"/><rect x="1" y="6" width="14" height="1" fill="#d8d8d8"/><rect x="9" y="1" width="1" height="14" fill="#d8d8d8"/><rect x="1" y="9" width="14" height="1" fill="#d8d8d8"/><rect x="12" y="1" width="1" height="14" fill="#d8d8d8"/><rect x="1" y="12" width="14" height="1" fill="#d8d8d8"/><polyline points="1.5,3 5,3 7,1.5 8,5 11,3.5 13.5,6.5 14.5,8" fill="none" stroke="#f03030" stroke-width="1.2"/><polyline points="1.5,4 5,4 6,7 9,7.5 11,5 13,9 14.5,12" fill="none" stroke="#0000f0" stroke-width="1.3"/><text x="3.5" y="14.5" font-family="Liberation Serif" font-style="italic" font-weight="bold" font-size="8.5" fill="#000">SC</text></svg><div class="t" style="left:135px;top:748px;font-size:11px;color:#fff;letter-spacing:-0.25px">SpectraPLUS-SC Sou...</div><div style="position:absolute;left:265px;top:741px;width:160px;height:24px;border-radius:3px;background:linear-gradient(to bottom,#5a9af8,#3c81f3 4px,#3a7ef2 20px,#2f6ee0);box-shadow:inset -1px -1px 0 #2a5fcc"></div><svg class="a" style="left:273px;top:744px" width="18" height="18" viewBox="0 0 18 18"><path d="M5 8h9l-1.5 9h-6z" fill="#d8c080" stroke="#7a6030" stroke-width="0.8"/><path d="M7 10l-3-8M9 10l0-9M11 10l3-8" stroke="#d03020" stroke-width="1.5"/><path d="M8 10l-1.5-8" stroke="#20a040" stroke-width="1.5"/><path d="M10 10l2-8" stroke="#f0c020" stroke-width="1.5"/></svg><div class="t" style="left:295px;top:748px;font-size:11px;color:#fff;letter-spacing:-0.2px">4.PNG - Paint</div><div style="position:absolute;left:802px;top:745px;width:16px;height:15px;background:#3a68cc"></div><div class="t" style="left:802px;top:748px;font-size:11px;color:#fff">RU</div><svg class="a" style="left:824px;top:745px" width="17" height="15" shape-rendering="crispEdges"><rect x="0.5" y="4.5" width="15" height="9" fill="#fff" stroke="#000"/><path d="M2 7h12M2 9h12M2 11h12" stroke="#000" stroke-dasharray="1 1"/><path d="M4 4V1h5" fill="none" stroke="#000"/></svg><div style="position:absolute;left:858px;top:738px;width:166px;height:30px;background:linear-gradient(to bottom,#1290e8 0px,#0c8ae8 1px,#2aa8f2 2px,#14a0f0 4px,#0f96ea 14px,#1192ea 26px,#0e72c8 28px,#0b5fb0 30px);box-shadow:inset 1px 0 0 #1a6cd8,inset 2px 0 0 #30a4ee"></div><div class="t" style="left:984px;top:748px;font-size:11.5px;color:#fff">17:55</div><svg class="a" style="left:868px;top:742px" width="112" height="22" viewBox="0 0 112 22"><circle cx="10.1" cy="10.1" r="7.6" fill="#2fb4f4"/><path d="M8.4 5.2Q4.5 6.8 4.6 11.2Q5 15.8 10 16Q14.5 15.8 15.9 11.5" fill="none" stroke="#101830" stroke-width="2"/><rect x="10.8" y="5.8" width="1.2" height="1.2" fill="#fff"/><rect x="13.6" y="5.8" width="1.2" height="1.2" fill="#fff"/><path d="M10.2 8.2Q12.5 10 15 8.2" fill="none" stroke="#fff" stroke-width="1"/><path d="M8 12.5Q9.5 13.2 11 12.5" fill="none" stroke="#101830" stroke-width="1"/><rect x="21" y="4" width="14" height="14" fill="#fff"/><path d="M21.6 4.6H27V9L31.5 4.6H35L22 17.4H21.6Z" fill="#e8101a"/><path d="M21.6 4.6H27V9L31.5 4.6H35L27.5 11H21.6Z" fill="#f08088"/><path d="M29 11.5L33 15.5H34.5V17.5H29V16Z" fill="#111"/><path d="M28 11L31 14L29 16L27 13Z" fill="#999"/><rect x="43.7" y="3.3" width="6.6" height="6.5" fill="#2c2c5e" stroke="#8080c0" stroke-width="0.7"/><rect x="38.5" y="6.3" width="6.9" height="6.8" fill="#2c2c5e" stroke="#9090c8" stroke-width="0.7"/><ellipse cx="41.5" cy="15.5" rx="3" ry="1.6" fill="#d8d0f0"/><ellipse cx="47" cy="12.5" rx="2.5" ry="1.2" fill="#c8c0e8"/><path d="M46 10.5L53 17.8M53 10.5L46 17.8" stroke="#e82828" stroke-width="2.1"/><ellipse cx="62" cy="9.5" rx="5.3" ry="5.6" fill="#707070"/><ellipse cx="62.5" cy="9.5" rx="3.2" ry="3.4" fill="#a8a8a8"/><circle cx="62.5" cy="9" r="1.5" fill="#e8e8e8"/><ellipse cx="58" cy="8" rx="1.4" ry="2.6" fill="#d0d0d8"/><path d="M66 17.5Q69 15 70 12M67.5 18.5Q70.5 16 71.5 13" fill="none" stroke="#c0b8f0" stroke-width="0.8"/><path d="M78.5 13L86 17.5L88 14L80.5 9.5Z" fill="#c8c8c8" stroke="#404040" stroke-width="0.8"/><rect x="81" y="12" width="4" height="2" fill="#303040"/><path d="M76 4L80 7.5L84 5.5L85 8L82 12L79 11.5L76.5 8Z" fill="#38c030"/><path d="M76 4L79 11.5L80.5 12" fill="none" stroke="#208020" stroke-width="1"/><circle cx="100.1" cy="11.1" r="7.8" fill="#1a9a58"/><rect x="95" y="12.5" width="1.4" height="1.4" fill="#fff"/><rect x="97.3" y="11" width="1.4" height="3" fill="#fff"/><rect x="99.7" y="9" width="1.4" height="5" fill="#f0fff0"/><rect x="102" y="7.5" width="1.2" height="6.5" fill="#80d0a0"/><circle cx="103.9" cy="14.8" r="3.9" fill="#6a1890"/><rect x="103" y="14" width="1.8" height="1.8" fill="#fff"/></svg></body></html>
